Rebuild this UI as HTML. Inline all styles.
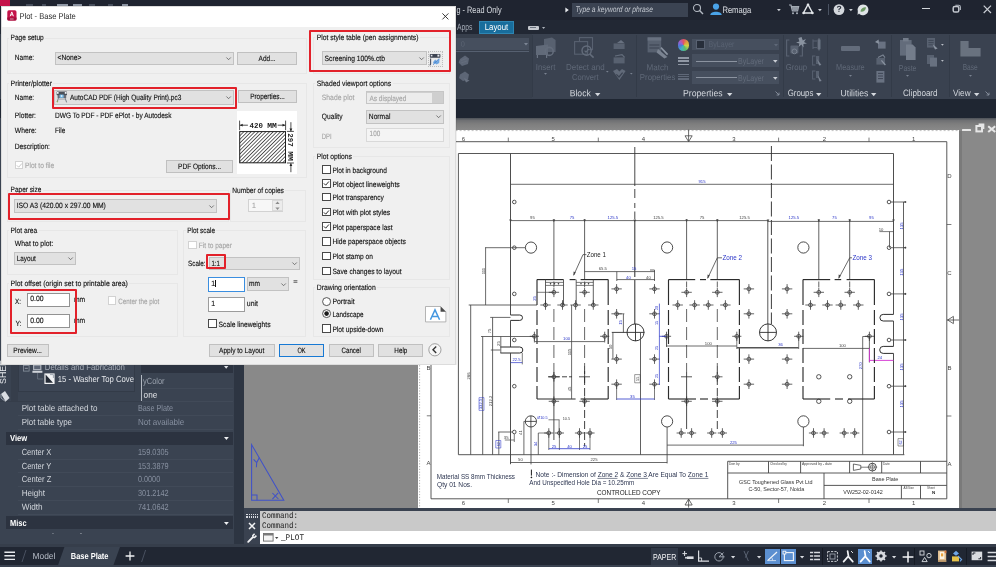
<!DOCTYPE html>
<html><head><meta charset="utf-8"><title>Plot - Base Plate</title>
<style>
html,body{margin:0;padding:0;}
body{width:996px;height:567px;overflow:hidden;position:relative;background:#1f2531;font-family:"Liberation Sans",sans-serif;}
.a{position:absolute;display:block;}
.t{position:absolute;white-space:nowrap;transform-origin:0 50%;display:block;}
svg{overflow:visible;}
#root{position:absolute;left:0;top:0;width:996px;height:567px;overflow:hidden;will-change:transform;}
</style></head><body><div id="root">
<div class="a" style="left:0.00px;top:0.00px;width:996.00px;height:19.50px;background:#1f2430;"></div>
<div class="a" style="left:0.00px;top:0.00px;width:10.40px;height:5.60px;background:#c4124a;"></div>
<div class="a" style="left:26.00px;top:4.00px;width:7.00px;height:1.80px;background:#454c5a;"></div>
<div class="a" style="left:41.50px;top:4.00px;width:4.50px;height:1.80px;background:#454c5a;"></div>
<div class="a" style="left:57.00px;top:4.00px;width:10.50px;height:1.80px;background:#9098a5;"></div>
<div class="a" style="left:73.00px;top:4.00px;width:9.00px;height:1.80px;background:#8a92a0;"></div>
<div class="a" style="left:89.00px;top:4.00px;width:6.00px;height:1.80px;background:#454c5a;"></div>
<div class="a" style="left:107.50px;top:4.00px;width:5.50px;height:1.80px;background:#454c5a;"></div>
<div class="a" style="left:121.60px;top:4.00px;width:6.40px;height:1.80px;background:#8a92a0;"></div>
<div class="a" style="left:0.00px;top:19.50px;width:996.00px;height:14.20px;background:#222834;"></div>
<div class="a" style="left:0.00px;top:33.70px;width:996.00px;height:65.00px;background:#3a4250;"></div>
<div class="a" style="left:0.00px;top:33.70px;width:531.50px;height:64.80px;background:#373f4c;"></div>
<div class="a" style="left:0.00px;top:98.50px;width:996.00px;height:19.20px;background:#1f2632;"></div>
<div class="a" style="left:244.00px;top:117.60px;width:752.00px;height:391.00px;background:#898989;"></div>
<div class="a" style="left:244px;top:117.6px;width:752px;height:12px;background:linear-gradient(#4d5158 0,#6f7073 2.5px,#7e7e7e 6px,#898989 12px)"></div>
<span class="t" style="left:456px;top:2px;font-size:9.4px;line-height:13.16px;color:#d9dde3;transform:translate(0.50px,0.82px) rotate(0.03deg) scaleX(0.7794);">g - Read Only</span>
<div class="a" style="left:572.30px;top:2.50px;width:116.00px;height:14.20px;background:#3b4352;"></div>
<svg class="a" style="left:565.4px;top:6.6px;" width="5" height="6" viewBox="0 0 5 6"><path d="M0.4,0.4 L3.8,3 L0.4,5.6Z" fill="#e8eaee"/></svg>
<span class="t" style="left:575px;top:3px;font-size:8.2px;line-height:11.48px;color:#c3c8d0;font-style:italic;transform:translate(0.50px,0.86px) rotate(0.03deg) scaleX(0.8228);">Type a keyword or phrase</span>
<svg class="a" style="left:692px;top:3.4px;" width="13" height="13" viewBox="0 0 13 13"><circle cx="5" cy="5" r="3.5" fill="none" stroke="#b4bac3" stroke-width="1.1"/><path d="M7.6,7.6 L11,11" stroke="#b4bac3" stroke-width="1.4"/></svg>
<svg class="a" style="left:708px;top:2px;" width="16" height="15" viewBox="0 0 16 15"><circle cx="8" cy="4.6" r="3.1" fill="#4aa3e8"/><path d="M2.3,13 C2.3,8.6 13.7,8.6 13.7,13Z" fill="#4aa3e8"/></svg>
<span class="t" style="left:722px;top:3px;font-size:9.4px;line-height:13.16px;color:#dde0e5;transform:translate(0.40px,0.22px) rotate(0.03deg) scaleX(0.8106);">Remaga</span>
<svg class="a" style="left:777.4px;top:9.059999999999999px;" width="3.8" height="2.4699999999999998" viewBox="0 0 3.8 2.4699999999999998"><path d="M0,0 L3.8,0 L1.9,2.375Z" fill="#c8ccd3"/></svg>
<svg class="a" style="left:789px;top:4px;" width="10" height="11" viewBox="0 0 10 11"><path d="M0,1 L2,1 L3.4,6.8 L8.6,6.8 L9.6,2.6 L2.6,2.6" fill="none" stroke="#a9b0ba" stroke-width="1.2"/><path d="M2.8,2.8 L9.4,2.8 L8.6,6.6 L3.6,6.6Z" fill="#8f96a1"/><circle cx="4" cy="9.2" r="1" fill="#a9b0ba"/><circle cx="8" cy="9.2" r="1" fill="#a9b0ba"/></svg>
<svg class="a" style="left:802px;top:3px;" width="12" height="12" viewBox="0 0 12 12"><path d="M6,1.5 L10.6,10 L1.4,10Z" fill="none" stroke="#e3e6ea" stroke-width="1.5" stroke-linejoin="round"/><circle cx="6" cy="1.8" r="1.3" fill="#e3e6ea"/><circle cx="1.6" cy="10" r="1.3" fill="#e3e6ea"/><circle cx="10.4" cy="10" r="1.3" fill="#e3e6ea"/></svg>
<svg class="a" style="left:817.6px;top:9.059999999999999px;" width="3.8" height="2.4699999999999998" viewBox="0 0 3.8 2.4699999999999998"><path d="M0,0 L3.8,0 L1.9,2.375Z" fill="#c8ccd3"/></svg>
<div class="a" style="left:828.00px;top:4.00px;width:1.00px;height:11.00px;background:#4b5362;"></div>
<svg class="a" style="left:833px;top:4px;" width="12" height="12" viewBox="0 0 12 12"><circle cx="6" cy="5.6" r="5.4" fill="#d3d7dc"/></svg>
<span class="t" style="left:836px;top:3px;font-size:8.5px;line-height:11.90px;color:#2a303c;font-weight:bold;transform:translate(0.40px,0.85px) rotate(0.03deg);">?</span>
<svg class="a" style="left:849.4px;top:9.059999999999999px;" width="3.8" height="2.4699999999999998" viewBox="0 0 3.8 2.4699999999999998"><path d="M0,0 L3.8,0 L1.9,2.375Z" fill="#c8ccd3"/></svg>
<svg class="a" style="left:857px;top:4px;" width="12" height="12" viewBox="0 0 12 12"><path d="M6,0.4 A5.4,5.4 0 1 1 2,9.4 L0.6,11 L0.8,7.2 A5.4,5.4 0 0 1 6,0.4Z" fill="#dfe3e6"/><path d="M3.4,7.6 C4,4 7,3 9,3.4 C8.6,6.4 6.4,8 3.4,7.6Z" fill="#6c9a63"/></svg>
<div class="a" style="left:922.20px;top:8.00px;width:7.40px;height:1.30px;background:#d2d6db;"></div>
<svg class="a" style="left:952px;top:4.4px;" width="10" height="10" viewBox="0 0 10 10"><rect x="1.2" y="2.4" width="5.6" height="5.6" rx="1.6" fill="none" stroke="#c4c8cf" stroke-width="1.5"/><path d="M3.4,1.2 L6.6,1.2 Q8.4,1.2 8.4,3 L8.4,6" fill="none" stroke="#aeb4bd" stroke-width="1.1"/></svg>
<svg class="a" style="left:982.5px;top:4.5px;" width="9" height="9" viewBox="0 0 9 9"><path d="M0.7,0.7 L8,8 M8,0.7 L0.7,8" stroke="#c9cdd3" stroke-width="1.2"/></svg>
<span class="t" style="left:457px;top:21px;font-size:9.2px;line-height:12.88px;color:#a4abb6;transform:translate(0.00px,0.06px) rotate(0.03deg) scaleX(0.7391);">Apps</span>
<div class="a" style="left:479.20px;top:21.00px;width:34.60px;height:12.80px;background:#186d9c;border:1px solid #2e86b3;box-sizing:border-box;"></div>
<span class="t" style="left:484px;top:21px;font-size:9.2px;line-height:12.88px;color:#ffffff;transform:translate(0.75px,0.16px) rotate(0.03deg) scaleX(0.8507);">Layout</span>
<div class="a" style="left:528.00px;top:25.80px;width:10.50px;height:4.20px;background:#c5c9cf;border-radius:1px;"></div>
<div class="a" style="left:530.00px;top:27.20px;width:6.00px;height:1.30px;background:#6c7480;"></div>
<svg class="a" style="left:541.6px;top:27.14px;" width="3.2" height="2.08" viewBox="0 0 3.2 2.08"><path d="M0,0 L3.2,0 L1.6,2.0Z" fill="#aeb4bd"/></svg>
<div class="a" style="left:456.00px;top:38.20px;width:73.00px;height:12.30px;background:#464f5e;"></div>
<div class="a" style="left:456.00px;top:50.50px;width:73.00px;height:0.80px;background:#566070;"></div>
<svg class="a" style="left:523.6px;top:43.4px;" width="4.0" height="2.6" viewBox="0 0 4.0 2.6"><path d="M0,0 L4.0,0 L2.0,2.5Z" fill="#7c8594"/></svg>
<span class="t" style="left:460px;top:39px;font-size:7.4px;line-height:10.36px;color:#5b6473;transform:translate(0.80px,0.42px) rotate(0.03deg);">0</span>
<svg class="a" style="left:457px;top:54px;" width="14" height="14" viewBox="0 0 14 14"><path d="M3,5 L8,1.6 L12,4.6 L11,10 L5,12 L1.6,8.6Z" fill="#5d6676"/><path d="M4,6.5 L9.6,4.4 M4,9 L10,7" stroke="#646d7c" stroke-width="1"/></svg>
<svg class="a" style="left:457px;top:70px;" width="14" height="14" viewBox="0 0 14 14"><path d="M3,4.4 L8,1.6 L12,4.6 L11,9.4 L6,11 L2,8Z" fill="#5d6676"/><path d="M7,8 L12.6,10.4 L9,12.6Z" fill="#687180"/></svg>
<div class="a" style="left:531.50px;top:35.00px;width:1.00px;height:62.00px;background:#333b48;"></div>
<div class="a" style="left:635.50px;top:35.00px;width:1.00px;height:62.00px;background:#333b48;"></div>
<div class="a" style="left:782.60px;top:35.00px;width:1.00px;height:62.00px;background:#333b48;"></div>
<div class="a" style="left:827.20px;top:35.00px;width:1.00px;height:62.00px;background:#333b48;"></div>
<div class="a" style="left:890.90px;top:35.00px;width:1.00px;height:62.00px;background:#333b48;"></div>
<div class="a" style="left:949.40px;top:35.00px;width:1.00px;height:62.00px;background:#333b48;"></div>
<svg class="a" style="left:535px;top:36px;" width="22" height="24" viewBox="0 0 22 24"><path d="M9,3 L17,1.4 L20.6,4 L20.6,16 L9,16Z" fill="#586170"/><path d="M1,10 L13,8.6 L13,19 L1,19Z" fill="#616a79"/><circle cx="14.2" cy="15.4" r="4" fill="none" stroke="#646d7c" stroke-width="1.6"/><path d="M2.4,19 L2.4,22 M11.6,19 L11.6,22" stroke="#6b7483" stroke-width="1.2"/></svg>
<span class="t" style="left:535px;top:60px;font-size:8.6px;line-height:12.04px;color:#5f6877;transform:translate(0.85px,0.68px) rotate(0.03deg) scaleX(0.9066);">Insert</span>
<svg class="a" style="left:544.1px;top:73.3px;" width="3.0" height="1.9500000000000002" viewBox="0 0 3.0 1.9500000000000002"><path d="M0,0 L3.0,0 L1.5,1.875Z" fill="#7a8391"/></svg>
<svg class="a" style="left:573px;top:36px;" width="24" height="24" viewBox="0 0 24 24"><rect x="6.5" y="1.6" width="13" height="12" fill="none" stroke="#586170" stroke-width="1.1"/><rect x="1.6" y="5.6" width="13" height="12.6" fill="#3a4250" stroke="#586170" stroke-width="1.1"/><circle cx="13.6" cy="14.6" r="4.6" fill="none" stroke="#646d7c" stroke-width="1.4"/><path d="M16.8,18 L20.6,21.6" stroke="#646d7c" stroke-width="1.6"/><path d="M11.6,14.6 L13,16.2 L15.8,12.8" fill="none" stroke="#646d7c" stroke-width="1.1"/></svg>
<span class="t" style="left:566px;top:60px;font-size:8.6px;line-height:12.04px;color:#5f6877;transform:translate(0.00px,0.88px) rotate(0.03deg) scaleX(0.9280);">Detect and</span>
<span class="t" style="left:572px;top:71px;font-size:8.6px;line-height:12.04px;color:#5f6877;transform:translate(0.00px,0.18px) rotate(0.03deg) scaleX(0.8833);">Convert</span>
<svg class="a" style="left:606.0px;top:71.42px;" width="2.6" height="1.6900000000000002" viewBox="0 0 2.6 1.6900000000000002"><path d="M0,0 L2.6,0 L1.3,1.625Z" fill="#7a8391"/></svg>
<svg class="a" style="left:613px;top:39px;" width="13" height="11" viewBox="0 0 13 11"><rect x="0.6" y="4.4" width="11" height="5.6" fill="#586170"/><path d="M4,4 L8,1 L11.4,4Z" fill="#687180"/></svg>
<svg class="a" style="left:613px;top:54px;" width="13" height="11" viewBox="0 0 13 11"><rect x="0.6" y="3.4" width="11" height="6" fill="#586170"/><path d="M2,2 L9,0.6 L11.6,3.4" fill="none" stroke="#646d7c" stroke-width="1.2"/></svg>
<svg class="a" style="left:612px;top:68px;" width="15" height="14" viewBox="0 0 15 14"><path d="M1,3 L5,1 L7.4,3.4 L10,1 L13.6,3 L7.4,12Z" fill="#616a79"/><path d="M4.4,6.4 L7,9 L10.6,4.6" fill="none" stroke="#3a4250" stroke-width="1.2"/></svg>
<svg class="a" style="left:629.7px;top:72.82px;" width="2.6" height="1.6900000000000002" viewBox="0 0 2.6 1.6900000000000002"><path d="M0,0 L2.6,0 L1.3,1.625Z" fill="#7a8391"/></svg>
<span class="t" style="left:569px;top:87px;font-size:9.2px;line-height:12.88px;color:#d4d8de;transform:translate(0.70px,0.26px) rotate(0.03deg) scaleX(0.9379);">Block</span>
<svg class="a" style="left:594.9px;top:92.78px;" width="5.4" height="3.5100000000000002" viewBox="0 0 5.4 3.5100000000000002"><path d="M0,0 L5.4,0 L2.7,3.375Z" fill="#d4d8de"/></svg>
<svg class="a" style="left:646px;top:36px;" width="24" height="24" viewBox="0 0 24 24"><rect x="1.6" y="1.4" width="13.6" height="15" fill="#586170"/><rect x="1.6" y="1.4" width="13.6" height="3.2" fill="#687180"/><path d="M3.4,9 L13.4,9 M3.4,12 L13.4,12" stroke="#3a4250" stroke-width="1"/><path d="M12,13 L21.4,21 L18.4,22.6 L10.6,16.6Z" fill="#7a8391"/><path d="M15,11.6 L21.6,18.6" stroke="#8a93a0" stroke-width="1.6"/></svg>
<span class="t" style="left:646px;top:61px;font-size:8.6px;line-height:12.04px;color:#5f6877;transform:translate(0.60px,0.18px) rotate(0.03deg) scaleX(0.9394);">Match</span>
<span class="t" style="left:639px;top:70px;font-size:8.6px;line-height:12.04px;color:#5f6877;transform:translate(0.85px,0.68px) rotate(0.03deg) scaleX(0.9057);">Properties</span>
<div class="a" style="left:677.8px;top:39.4px;width:11.2px;height:11.2px;border-radius:50%;background:conic-gradient(#e8546a,#e9a53c,#d6d84a,#5fc36a,#45b7c9,#4e7be0,#a45fd6,#e8546a);opacity:.95"></div>
<div class="a" style="left:678.20px;top:57.20px;width:10.80px;height:1.90px;background:#9098a5;"></div>
<div class="a" style="left:678.20px;top:60.40px;width:10.80px;height:1.90px;background:#9098a5;"></div>
<div class="a" style="left:678.20px;top:63.60px;width:10.80px;height:1.90px;background:#9098a5;"></div>
<div class="a" style="left:678.20px;top:73.60px;width:10.80px;height:1.20px;background:#5f6878;"></div>
<div class="a" style="left:678.20px;top:76.00px;width:10.80px;height:1.20px;background:#5f6878;"></div>
<div class="a" style="left:678.20px;top:78.40px;width:10.80px;height:1.20px;background:#5f6878;"></div>
<div class="a" style="left:691.80px;top:38.80px;width:87.60px;height:11.60px;background:#464f5e;"></div>
<div class="a" style="left:691.80px;top:54.40px;width:87.60px;height:12.60px;background:#464f5e;"></div>
<div class="a" style="left:691.80px;top:71.00px;width:87.60px;height:12.80px;background:#464f5e;"></div>
<div class="a" style="left:695.60px;top:40.00px;width:9.80px;height:9.40px;background:#272e3a;border:1px solid #596272;box-sizing:border-box;"></div>
<span class="t" style="left:708px;top:39px;font-size:8.4px;line-height:11.76px;color:#596272;transform:translate(0.60px,0.02px) rotate(0.03deg) scaleX(0.8405);">ByLayer</span>
<svg class="a" style="left:773.6px;top:43.8px;" width="4.0" height="2.6" viewBox="0 0 4.0 2.6"><path d="M0,0 L4.0,0 L2.0,2.5Z" fill="#5f6878"/></svg>
<div class="a" style="left:696.00px;top:60.60px;width:41.00px;height:1.00px;background:#8b93a0;"></div>
<span class="t" style="left:738px;top:54px;font-size:8.6px;line-height:12.04px;color:#626b7a;transform:translate(0.00px,0.98px) rotate(0.03deg) scaleX(0.8241);">ByLayer</span>
<svg class="a" style="left:773.3000000000001px;top:60.019999999999996px;" width="4.6" height="2.9899999999999998" viewBox="0 0 4.6 2.9899999999999998"><path d="M0,0 L4.6,0 L2.3,2.875Z" fill="#c9cdd4"/></svg>
<div class="a" style="left:696.00px;top:77.20px;width:41.00px;height:1.00px;background:#8b93a0;"></div>
<span class="t" style="left:738px;top:71px;font-size:8.6px;line-height:12.04px;color:#626b7a;transform:translate(0.00px,0.58px) rotate(0.03deg) scaleX(0.8241);">ByLayer</span>
<svg class="a" style="left:773.3000000000001px;top:76.62px;" width="4.6" height="2.9899999999999998" viewBox="0 0 4.6 2.9899999999999998"><path d="M0,0 L4.6,0 L2.3,2.875Z" fill="#c9cdd4"/></svg>
<span class="t" style="left:683px;top:87px;font-size:9.2px;line-height:12.88px;color:#d4d8de;transform:translate(0.00px,0.26px) rotate(0.03deg) scaleX(0.9444);">Properties</span>
<svg class="a" style="left:726.5999999999999px;top:92.78px;" width="5.4" height="3.5100000000000002" viewBox="0 0 5.4 3.5100000000000002"><path d="M0,0 L5.4,0 L2.7,3.375Z" fill="#d4d8de"/></svg>
<svg class="a" style="left:774.5px;top:91.4px;" width="5" height="5" viewBox="0 0 5 5"><path d="M0.5,0.5 L4,4 M4,1.6 L4,4 L1.6,4" fill="none" stroke="#8a93a0" stroke-width="0.9"/></svg>
<svg class="a" style="left:785px;top:36px;" width="23" height="24" viewBox="0 0 23 24"><path d="M4.4,4 L1.6,4 L1.6,20 L4.4,20 M14.6,4 L17.4,4 L17.4,20 L14.6,20" fill="none" stroke="#586170" stroke-width="1.2"/><rect x="5.4" y="9.6" width="8" height="8" rx="1" fill="#586170"/><circle cx="9.4" cy="15.4" r="2.4" fill="none" stroke="#7a8391" stroke-width="1"/><path d="M16.6,1 L17.6,4.4 L21,3 L19,6 L22,7.6 L18.4,8 L18.6,11.6 L16.4,8.6 L13.6,11 L14.4,7.6 L11,6.6 L14.4,5.4 L13.4,2 Z" fill="#8a93a0"/></svg>
<span class="t" style="left:785px;top:61px;font-size:8.6px;line-height:12.04px;color:#5f6877;transform:translate(0.65px,0.38px) rotate(0.03deg) scaleX(0.8995);">Group</span>
<svg class="a" style="left:811px;top:38px;" width="12" height="13" viewBox="0 0 12 13"><path d="M2,1.4 L2,11 M2,3 L6,3 M2,9.6 L6,9.6" stroke="#586170" stroke-width="1"/><rect x="6.4" y="1.6" width="3.4" height="9.6" fill="#586170"/><path d="M8,0.4 L8,12.4" stroke="#7a8391" stroke-width="1"/></svg>
<svg class="a" style="left:811px;top:54px;" width="12" height="13" viewBox="0 0 12 13"><path d="M1.6,1.6 L1.6,11.4 M1.6,2 L4.4,2 M1.6,11 L4.4,11" stroke="#586170" stroke-width="1"/><rect x="5" y="2" width="3.2" height="8" fill="#586170"/><path d="M6,5 L10.4,11 L8,11.4Z" fill="#7a8391"/></svg>
<svg class="a" style="left:811px;top:69px;" width="12" height="14" viewBox="0 0 12 14"><path d="M1.6,1.6 L1.6,10.4 M1.6,2 L4.4,2 M1.6,10 L4.4,10" stroke="#586170" stroke-width="1"/><rect x="5" y="2" width="3" height="7" fill="#586170"/><path d="M6.6,6 L10.6,12 L8.4,12.6Z" fill="#7a8391"/></svg>
<span class="t" style="left:787px;top:87px;font-size:9.2px;line-height:12.88px;color:#d4d8de;transform:translate(0.70px,0.26px) rotate(0.03deg) scaleX(0.8518);">Groups</span>
<svg class="a" style="left:815.9px;top:92.78px;" width="5.4" height="3.5100000000000002" viewBox="0 0 5.4 3.5100000000000002"><path d="M0,0 L5.4,0 L2.7,3.375Z" fill="#d4d8de"/></svg>
<div class="a" style="left:840.60px;top:46.00px;width:19.60px;height:5.00px;background:#636c7b;border-radius:1px;"></div>
<span class="t" style="left:836px;top:61px;font-size:8.6px;line-height:12.04px;color:#5f6877;transform:translate(0.10px,0.38px) rotate(0.03deg) scaleX(0.8547);">Measure</span>
<svg class="a" style="left:848.9px;top:74.69999999999999px;" width="3.0" height="1.9500000000000002" viewBox="0 0 3.0 1.9500000000000002"><path d="M0,0 L3.0,0 L1.5,1.875Z" fill="#7a8391"/></svg>
<svg class="a" style="left:874px;top:38px;" width="13" height="13" viewBox="0 0 13 13"><rect x="4" y="3.6" width="7.6" height="7" fill="#697282"/><path d="M1,4 L4.6,1.4 L5,6Z" fill="#8a93a0"/></svg>
<svg class="a" style="left:874px;top:54px;" width="13" height="13" viewBox="0 0 13 13"><rect x="2.4" y="4" width="8.6" height="6.6" fill="#586170"/><path d="M4,3.4 L9,1 L11,3.6" fill="none" stroke="#7a8391" stroke-width="1.1"/><path d="M7.4,6.4 L11.4,11" stroke="#8a93a0" stroke-width="1.2"/></svg>
<svg class="a" style="left:875px;top:70px;" width="11" height="14" viewBox="0 0 11 14"><rect x="1.4" y="1" width="8" height="11.6" fill="#697282"/><path d="M3,3.4 L8,3.4 M3,6 L8,6 M3,8.6 L8,8.6" stroke="#3a4250" stroke-width="0.9"/></svg>
<span class="t" style="left:840px;top:87px;font-size:9.2px;line-height:12.88px;color:#d4d8de;transform:translate(0.50px,0.26px) rotate(0.03deg) scaleX(0.9410);">Utilities</span>
<svg class="a" style="left:871.3px;top:92.78px;" width="5.4" height="3.5100000000000002" viewBox="0 0 5.4 3.5100000000000002"><path d="M0,0 L5.4,0 L2.7,3.375Z" fill="#d4d8de"/></svg>
<svg class="a" style="left:898px;top:36px;" width="20" height="26" viewBox="0 0 20 26"><rect x="2" y="4" width="11.6" height="15.6" fill="#636c7b"/><rect x="5" y="2" width="5.6" height="3.4" fill="#737c8a"/><path d="M8,8.6 L14.6,8.6 L17.6,11.6 L17.6,24 L8,24Z" fill="#747d8b"/></svg>
<span class="t" style="left:898px;top:61px;font-size:8.6px;line-height:12.04px;color:#5f6877;transform:translate(0.85px,0.58px) rotate(0.03deg) scaleX(0.7958);">Paste</span>
<svg class="a" style="left:906.3px;top:74.69999999999999px;" width="3.0" height="1.9500000000000002" viewBox="0 0 3.0 1.9500000000000002"><path d="M0,0 L3.0,0 L1.5,1.875Z" fill="#7a8391"/></svg>
<svg class="a" style="left:926px;top:37px;" width="13" height="14" viewBox="0 0 13 14"><rect x="1" y="1" width="8" height="9.6" fill="#586170"/><path d="M2.4,3.4 L7.6,3.4 M2.4,5.6 L7.6,5.6 M2.4,7.8 L7.6,7.8" stroke="#3a4250" stroke-width="0.8"/><path d="M6.6,7 L11.6,11.6 L9,12.4Z" fill="#8a93a0"/></svg>
<svg class="a" style="left:941.0px;top:43.76px;" width="2.8" height="1.8199999999999998" viewBox="0 0 2.8 1.8199999999999998"><path d="M0,0 L2.8,0 L1.4,1.75Z" fill="#b9bec6"/></svg>
<svg class="a" style="left:926px;top:54px;" width="13" height="14" viewBox="0 0 13 14"><rect x="1" y="1" width="7" height="9" fill="#586170"/><rect x="4" y="3.6" width="7" height="9" fill="#687180"/></svg>
<svg class="a" style="left:941.0px;top:60.16px;" width="2.8" height="1.8199999999999998" viewBox="0 0 2.8 1.8199999999999998"><path d="M0,0 L2.8,0 L1.4,1.75Z" fill="#b9bec6"/></svg>
<span class="t" style="left:903px;top:87px;font-size:9.2px;line-height:12.88px;color:#d4d8de;transform:translate(0.00px,0.26px) rotate(0.03deg) scaleX(0.8786);">Clipboard</span>
<svg class="a" style="left:959px;top:40px;" width="23" height="18" viewBox="0 0 23 18"><path d="M1.4,1 L9.6,1 L9.6,8 L21.6,8 L21.6,16.6 L1.4,16.6Z" fill="#69727f"/></svg>
<span class="t" style="left:962px;top:61px;font-size:8.6px;line-height:12.04px;color:#5f6877;transform:translate(0.70px,0.38px) rotate(0.03deg) scaleX(0.7652);">Base</span>
<svg class="a" style="left:968.9px;top:74.69999999999999px;" width="3.0" height="1.9500000000000002" viewBox="0 0 3.0 1.9500000000000002"><path d="M0,0 L3.0,0 L1.5,1.875Z" fill="#7a8391"/></svg>
<span class="t" style="left:953px;top:87px;font-size:9.2px;line-height:12.88px;color:#d4d8de;transform:translate(0.00px,0.26px) rotate(0.03deg) scaleX(0.8900);">View</span>
<svg class="a" style="left:974.1999999999999px;top:92.78px;" width="5.4" height="3.5100000000000002" viewBox="0 0 5.4 3.5100000000000002"><path d="M0,0 L5.4,0 L2.7,3.375Z" fill="#d4d8de"/></svg>
<svg class="a" style="left:984.5px;top:91.4px;" width="5" height="5" viewBox="0 0 5 5"><path d="M0.5,0.5 L4,4 M4,1.6 L4,4 L1.6,4" fill="none" stroke="#8a93a0" stroke-width="0.9"/></svg>
<div class="a" style="left:417.50px;top:129.50px;width:541.50px;height:378.00px;background:#ffffff;"></div>
<div class="a" style="left:959.00px;top:131.00px;width:2.50px;height:377.00px;background:#7a7a7a;"></div>
<svg class="a" style="left:0;top:0" width="996" height="567" viewBox="0 0 996 567" font-family="Liberation Sans, sans-serif" fill="none"><path d="M431,141.7 L946.8,141.7" stroke="#454545" stroke-width="0.9"/><path d="M431,141.7 L431,498.8" stroke="#454545" stroke-width="0.9"/><path d="M946.8,141.7 L946.8,498.8" stroke="#454545" stroke-width="0.9"/><path d="M431,498.8 L946.8,498.8" stroke="#454545" stroke-width="0.9"/><path d="M419.6,130 L419.6,507.5" stroke="#9a9a9a" stroke-width="0.8" stroke-dasharray="1.2 1.6"/><path d="M419.6,130.6 L958.6,130.6" stroke="#b0b0b0" stroke-width="0.8" stroke-dasharray="2 2"/><text x="463.3" y="141" font-size="6" fill="#454545" text-anchor="middle">6</text><text x="463.3" y="504.6" font-size="6" fill="#454545" text-anchor="middle">6</text><text x="553.2" y="141" font-size="6" fill="#454545" text-anchor="middle">5</text><text x="553.2" y="504.6" font-size="6" fill="#454545" text-anchor="middle">5</text><text x="643.5" y="141" font-size="6" fill="#454545" text-anchor="middle">4</text><text x="643.5" y="504.6" font-size="6" fill="#454545" text-anchor="middle">4</text><text x="734" y="141" font-size="6" fill="#454545" text-anchor="middle">3</text><text x="734" y="504.6" font-size="6" fill="#454545" text-anchor="middle">3</text><text x="824.4" y="141" font-size="6" fill="#454545" text-anchor="middle">2</text><text x="824.4" y="504.6" font-size="6" fill="#454545" text-anchor="middle">2</text><text x="913.6" y="141" font-size="6" fill="#454545" text-anchor="middle">1</text><text x="913.6" y="504.6" font-size="6" fill="#454545" text-anchor="middle">1</text><path d="M508.3,137.6 L508.3,141.7" stroke="#454545" stroke-width="0.7"/><path d="M508.3,498.8 L508.3,503" stroke="#454545" stroke-width="0.7"/><path d="M598.3,137.6 L598.3,141.7" stroke="#454545" stroke-width="0.7"/><path d="M598.3,498.8 L598.3,503" stroke="#454545" stroke-width="0.7"/><path d="M778.6,137.6 L778.6,141.7" stroke="#454545" stroke-width="0.7"/><path d="M778.6,498.8 L778.6,503" stroke="#454545" stroke-width="0.7"/><path d="M869,137.6 L869,141.7" stroke="#454545" stroke-width="0.7"/><path d="M869,498.8 L869,503" stroke="#454545" stroke-width="0.7"/><path d="M685,135.8 L692.2,135.8 L688.6,141.6Z" stroke="#454545" stroke-width="0.8" fill="none"/><path d="M688.6,129.6 L688.6,141.6" stroke="#454545" stroke-width="0.8"/><path d="M685,505 L692.2,505 L688.6,499Z" stroke="#454545" stroke-width="0.8" fill="none"/><path d="M688.6,499 L688.6,507.6" stroke="#454545" stroke-width="0.8"/><path d="M947.6,320 L953.4,316.4 L953.4,323.6Z" stroke="#454545" stroke-width="0.8" fill="none"/><path d="M947,320 L959,320" stroke="#454545" stroke-width="0.8"/><text x="949.4" y="178.4" font-size="6" fill="#454545" text-anchor="middle">D</text><text x="949.4" y="274.8" font-size="6" fill="#454545" text-anchor="middle">C</text><text x="949.4" y="369.8" font-size="6" fill="#454545" text-anchor="middle">B</text><text x="949.4" y="466" font-size="6" fill="#454545" text-anchor="middle">A</text><text x="428.4" y="369.8" font-size="6" fill="#454545" text-anchor="middle">B</text><text x="428.4" y="465.2" font-size="6" fill="#454545" text-anchor="middle">A</text><path d="M946.8,224.5 L951.4,224.5" stroke="#454545" stroke-width="0.7"/><path d="M946.8,416 L951.4,416" stroke="#454545" stroke-width="0.7"/><path d="M426.8,415.8 L431,415.8" stroke="#454545" stroke-width="0.7"/><path d="M458.4,153.5 L893.5,153.5" stroke="#454545" stroke-width="0.9"/><path d="M458.4,153.5 L458.4,454.7" stroke="#454545" stroke-width="0.9"/><path d="M510.5,153.5 L510.5,315" stroke="#454545" stroke-width="0.95"/><path d="M893.5,153.5 L893.5,314.4" stroke="#454545" stroke-width="0.95"/><path d="M510.5,184.3 L893.5,184.3" stroke="#454545" stroke-width="0.8"/><text x="702" y="183" font-size="4.2" fill="#2a35c8" text-anchor="middle">915</text><path d="M634.8,147 L634.8,186" stroke="#333" stroke-width="0.9"/><path d="M634.8,189 L634.8,198" stroke="#333" stroke-width="0.9"/><path d="M634.8,203 L634.8,208" stroke="#333" stroke-width="0.9"/><path d="M634.8,211.5 L634.8,219" stroke="#333" stroke-width="0.9"/><path d="M634.8,220 L634.8,277" stroke="#333" stroke-width="1.05"/><path d="M634.8,280 L634.8,324" stroke="#333" stroke-width="1.05"/><path d="M771.4,146 L771.4,324" stroke="#333" stroke-width="0.95" stroke-dasharray="15 3.5"/><path d="M767.8,221 L767.8,324" stroke="#454545" stroke-width="0.9"/><path d="M510.5,220.6 L768,220.6" stroke="#454545" stroke-width="0.8"/><path d="M768,221.4 L893.5,221.4" stroke="#454545" stroke-width="0.8"/><path d="M553.9,219 L553.9,279.6" stroke="#454545" stroke-width="0.85"/><path d="M553.9,281.5 L553.9,287" stroke="#454545" stroke-width="0.85"/><path d="M584.6,219 L584.6,279.6" stroke="#454545" stroke-width="0.85"/><path d="M584.6,281.5 L584.6,287" stroke="#454545" stroke-width="0.85"/><path d="M686.6,219 L686.6,279.6" stroke="#454545" stroke-width="0.85"/><path d="M686.6,281.5 L686.6,287" stroke="#454545" stroke-width="0.85"/><path d="M717.3,219 L717.3,279.6" stroke="#454545" stroke-width="0.85"/><path d="M717.3,281.5 L717.3,287" stroke="#454545" stroke-width="0.85"/><path d="M818.8,219 L818.8,279.6" stroke="#454545" stroke-width="0.85"/><path d="M818.8,281.5 L818.8,287" stroke="#454545" stroke-width="0.85"/><path d="M849.7,219 L849.7,279.6" stroke="#454545" stroke-width="0.85"/><path d="M849.7,281.5 L849.7,287" stroke="#454545" stroke-width="0.85"/><text x="532.4" y="219.2" font-size="4.2" fill="#454545" text-anchor="middle">95</text><text x="572" y="219.2" font-size="4.2" fill="#2a35c8" text-anchor="middle">75</text><text x="612.8" y="219.2" font-size="4.2" fill="#2a35c8" text-anchor="middle">125.5</text><text x="658.4" y="219.2" font-size="4.2" fill="#454545" text-anchor="middle">125.5</text><text x="702" y="219.2" font-size="4.2" fill="#454545" text-anchor="middle">75</text><text x="744.5" y="219.2" font-size="4.2" fill="#454545" text-anchor="middle">125.5</text><text x="793.8" y="219.2" font-size="4.2" fill="#2a35c8" text-anchor="middle">125.5</text><text x="834.4" y="219.2" font-size="4.2" fill="#2a35c8" text-anchor="middle">75</text><text x="871.4" y="219.2" font-size="4.2" fill="#2a35c8" text-anchor="middle">95</text><path d="M509.2,219.6 L511.8,219.6 L510.5,222.2Z" stroke="none" stroke-width="0" fill="#454545"/><path d="M552.6,219.6 L555.1999999999999,219.6 L553.9,222.2Z" stroke="none" stroke-width="0" fill="#454545"/><path d="M583.3000000000001,219.6 L585.9,219.6 L584.6,222.2Z" stroke="none" stroke-width="0" fill="#454545"/><path d="M633.5,219.6 L636.0999999999999,219.6 L634.8,222.2Z" stroke="none" stroke-width="0" fill="#454545"/><path d="M685.3000000000001,219.6 L687.9,219.6 L686.6,222.2Z" stroke="none" stroke-width="0" fill="#454545"/><path d="M716.0,219.6 L718.5999999999999,219.6 L717.3,222.2Z" stroke="none" stroke-width="0" fill="#454545"/><path d="M766.7,219.6 L769.3,219.6 L768,222.2Z" stroke="none" stroke-width="0" fill="#454545"/><path d="M817.5,219.6 L820.0999999999999,219.6 L818.8,222.2Z" stroke="none" stroke-width="0" fill="#454545"/><path d="M848.4000000000001,219.6 L851.0,219.6 L849.7,222.2Z" stroke="none" stroke-width="0" fill="#454545"/><path d="M892.2,219.6 L894.8,219.6 L893.5,222.2Z" stroke="none" stroke-width="0" fill="#454545"/><circle cx="514.3" cy="202" r="1.8" stroke="#2c2c2c" stroke-width="0.8" fill="none"/><circle cx="889" cy="202" r="1.8" stroke="#2c2c2c" stroke-width="0.8" fill="none"/><circle cx="514.3" cy="247.7" r="1.8" stroke="#2c2c2c" stroke-width="0.8" fill="none"/><circle cx="889" cy="247.7" r="1.8" stroke="#2c2c2c" stroke-width="0.8" fill="none"/><circle cx="514.3" cy="293.9" r="1.8" stroke="#2c2c2c" stroke-width="0.8" fill="none"/><circle cx="889" cy="293.9" r="1.8" stroke="#2c2c2c" stroke-width="0.8" fill="none"/><circle cx="514.3" cy="340" r="1.8" stroke="#2c2c2c" stroke-width="0.8" fill="none"/><circle cx="889" cy="340" r="1.8" stroke="#2c2c2c" stroke-width="0.8" fill="none"/><circle cx="514.3" cy="386.2" r="1.8" stroke="#2c2c2c" stroke-width="0.8" fill="none"/><circle cx="889" cy="386.2" r="1.8" stroke="#2c2c2c" stroke-width="0.8" fill="none"/><circle cx="514.3" cy="432" r="1.8" stroke="#2c2c2c" stroke-width="0.8" fill="none"/><circle cx="889" cy="432" r="1.8" stroke="#2c2c2c" stroke-width="0.8" fill="none"/><path d="M525.4,421.4 L536.4,421.4" stroke="#2c2c2c" stroke-width="0.8"/><path d="M530.9,416 L530.9,427" stroke="#2c2c2c" stroke-width="0.8"/><circle cx="531" cy="247.6" r="5.6" stroke="#2c2c2c" stroke-width="0.85" fill="none"/><circle cx="667.1" cy="247.5" r="5.6" stroke="#2c2c2c" stroke-width="0.85" fill="none"/><circle cx="803.4" cy="247.5" r="5.6" stroke="#2c2c2c" stroke-width="0.85" fill="none"/><circle cx="530.9" cy="421.4" r="5.6" stroke="#2c2c2c" stroke-width="0.85" fill="none"/><circle cx="667.1" cy="421.4" r="5.6" stroke="#2c2c2c" stroke-width="0.85" fill="none"/><circle cx="803.4" cy="421.4" r="5.6" stroke="#2c2c2c" stroke-width="0.85" fill="none"/><path d="M485,247.7 L525.4,247.7" stroke="#454545" stroke-width="0.8"/><path d="M485.6,247.7 L485.6,305" stroke="#454545" stroke-width="0.8"/><text x="484.6" y="271" font-size="4.2" fill="#454545" text-anchor="middle" transform="rotate(-90 484.6 271)">111</text><path d="M468.7,305 L537,305" stroke="#454545" stroke-width="0.85"/><path d="M470.7,305 L470.7,454.7" stroke="#454545" stroke-width="0.85"/><path d="M482.7,336.5 L482.7,454.7" stroke="#454545" stroke-width="0.85"/><path d="M492.6,317.4 L492.6,454.7" stroke="#454545" stroke-width="0.85"/><path d="M481,336.5 L534.4,336.5" stroke="#454545" stroke-width="0.8"/><text x="469.8" y="376" font-size="4.2" fill="#454545" text-anchor="middle" transform="rotate(-90 469.8 376)">286</text><text x="491.8" y="401" font-size="4.2" fill="#454545" text-anchor="middle" transform="rotate(-90 491.8 401)">212.2</text><text x="481.8" y="404" font-size="4.2" fill="#2a35c8" text-anchor="middle" transform="rotate(-90 481.8 404)">332.5</text><path d="M479,397.6 L484,397.6 L484,410.4 L479,410.4Z" stroke="#2a35c8" stroke-width="0.5" fill="none"/><text x="491.4" y="331" font-size="4.2" fill="#454545" text-anchor="middle" transform="rotate(-90 491.4 331)">75</text><path d="M490.2,317.4 L510.5,317.4" stroke="#454545" stroke-width="0.8"/><path d="M510.5,315 L519.8,315 A2.7,2.7 0 0 1 519.8,320.4 L510.5,320.4" stroke="#2c2c2c" stroke-width="1.0" fill="none"/><path d="M510.5,320.4 L510.5,347" stroke="#454545" stroke-width="0.95"/><path d="M490.8,350 L500.4,350" stroke="#454545" stroke-width="0.8"/><path d="M500.4,347 L519.8,347 A3,3 0 0 1 519.8,353 L500.4,353" stroke="#2c2c2c" stroke-width="1.0" fill="none"/><path d="M500.8,336.5 L500.8,353" stroke="#454545" stroke-width="0.8"/><text x="500" y="343.6" font-size="4.2" fill="#454545" text-anchor="middle" transform="rotate(-90 500 343.6)">25</text><path d="M510.5,353 L510.5,464.2" stroke="#454545" stroke-width="0.95"/><path d="M522.3,353 L522.3,364.4" stroke="#454545" stroke-width="0.7"/><path d="M510.5,362.6 L522.3,362.6" stroke="#2a35c8" stroke-width="0.7"/><text x="516.6" y="361.4" font-size="4.2" fill="#2a35c8" text-anchor="middle">22.5</text><path d="M893.5,314.4 L883.2,314.4 A3.3,3.3 0 0 0 883.2,321 L893.5,321" stroke="#2c2c2c" stroke-width="1.0" fill="none"/><path d="M893.5,321 L893.5,346.4" stroke="#454545" stroke-width="0.95"/><path d="M893.5,346.4 L883.2,346.4 A3.4,3.4 0 0 0 883.2,353.4 L893.5,353.4" stroke="#2c2c2c" stroke-width="1.0" fill="none"/><path d="M893.5,353.4 L893.5,454.6" stroke="#454545" stroke-width="0.95"/><path d="M903.5,202 L903.5,454.6" stroke="#454545" stroke-width="0.85"/><path d="M891,202 L906.4,202" stroke="#454545" stroke-width="0.8"/><path d="M903.5,202 L906,200.9 L906,203.1Z" stroke="none" stroke-width="0" fill="#454545"/><path d="M891,247.7 L906.4,247.7" stroke="#454545" stroke-width="0.8"/><path d="M903.5,247.7 L906,246.6 L906,248.79999999999998Z" stroke="none" stroke-width="0" fill="#454545"/><path d="M891,293.9 L906.4,293.9" stroke="#454545" stroke-width="0.8"/><path d="M903.5,293.9 L906,292.79999999999995 L906,295.0Z" stroke="none" stroke-width="0" fill="#454545"/><path d="M891,340 L906.4,340" stroke="#454545" stroke-width="0.8"/><path d="M903.5,340 L906,338.9 L906,341.1Z" stroke="none" stroke-width="0" fill="#454545"/><path d="M891,386.2 L906.4,386.2" stroke="#454545" stroke-width="0.8"/><path d="M903.5,386.2 L906,385.09999999999997 L906,387.3Z" stroke="none" stroke-width="0" fill="#454545"/><path d="M891,432 L906.4,432" stroke="#454545" stroke-width="0.8"/><path d="M903.5,432 L906,430.9 L906,433.1Z" stroke="none" stroke-width="0" fill="#454545"/><text x="902.6" y="226" font-size="4.2" fill="#2a35c8" text-anchor="middle" transform="rotate(-90 902.6 226)">135</text><text x="902.6" y="272.2" font-size="4.2" fill="#2a35c8" text-anchor="middle" transform="rotate(-90 902.6 272.2)">135</text><text x="902.6" y="317" font-size="4.2" fill="#2a35c8" text-anchor="middle" transform="rotate(-90 902.6 317)">135</text><text x="902.6" y="367" font-size="4.2" fill="#2a35c8" text-anchor="middle" transform="rotate(-90 902.6 367)">135</text><text x="902.6" y="404" font-size="4.2" fill="#2a35c8" text-anchor="middle" transform="rotate(-90 902.6 404)">135</text><text x="881" y="230.6" font-size="4.2" fill="#454545" text-anchor="middle">10</text><path d="M879.4,231.6 L893.5,231.6" stroke="#454545" stroke-width="0.7"/><path d="M889.5,231.6 L889.5,247.7" stroke="#454545" stroke-width="0.8"/><path d="M898,438.6 L903.4,438.6 L903.4,446 L898,446Z" stroke="#454545" stroke-width="0.55" fill="none"/><text x="901.8" y="442.4" font-size="3.8" fill="#2a35c8" text-anchor="middle" transform="rotate(-90 901.8 442.4)">62</text><path d="M869.4,336.5 L869.4,362.5" stroke="#454545" stroke-width="0.8"/><path d="M869.4,348 L869.4,362" stroke="#d32fd0" stroke-width="0.9"/><path d="M869.4,360.4 L893.5,360.4" stroke="#d32fd0" stroke-width="0.9"/><text x="879.8" y="359.4" font-size="4.2" fill="#2a35c8" text-anchor="middle">24</text><path d="M862.7,336.5 L869.4,336.5" stroke="#454545" stroke-width="0.8"/><path d="M862.7,336.5 L862.7,454.6" stroke="#454545" stroke-width="0.8"/><text x="861.6" y="365.8" font-size="4.2" fill="#2a35c8" text-anchor="middle" transform="rotate(-90 861.6 365.8)">270</text><path d="M537,279.6 L563.6,279.6" stroke="#2c2c2c" stroke-width="1.15"/><path d="M569.6,279.6 L575.6,279.6" stroke="#2c2c2c" stroke-width="1.15"/><path d="M580.6,279.6 L608.2,279.6" stroke="#2c2c2c" stroke-width="1.15"/><path d="M537,399 L575.6,399" stroke="#2c2c2c" stroke-width="1.15"/><path d="M580.6,399 L608.2,399" stroke="#2c2c2c" stroke-width="1.15"/><path d="M537,279.6 L537,305" stroke="#2c2c2c" stroke-width="1.15"/><path d="M537,310 L537,399" stroke="#2c2c2c" stroke-width="1.15" stroke-dasharray="15 4"/><path d="M608.2,279.6 L608.2,305" stroke="#2c2c2c" stroke-width="1.15"/><path d="M608.2,310 L608.2,399" stroke="#2c2c2c" stroke-width="1.15" stroke-dasharray="15 4"/><path d="M668.5,279.6 L695.2,279.6" stroke="#2c2c2c" stroke-width="1.15"/><path d="M700,279.6 L706,279.6" stroke="#2c2c2c" stroke-width="1.15"/><path d="M710.3,279.6 L739.4,279.6" stroke="#2c2c2c" stroke-width="1.15"/><path d="M668.5,399 L696,399" stroke="#2c2c2c" stroke-width="1.15"/><path d="M700,399 L708,399" stroke="#2c2c2c" stroke-width="1.15"/><path d="M712,399 L739.4,399" stroke="#2c2c2c" stroke-width="1.15"/><path d="M668.5,279.6 L668.5,305" stroke="#2c2c2c" stroke-width="1.15"/><path d="M668.5,310 L668.5,399" stroke="#2c2c2c" stroke-width="1.15" stroke-dasharray="15 4"/><path d="M739.4,279.6 L739.4,305" stroke="#2c2c2c" stroke-width="1.15"/><path d="M739.4,310 L739.4,399" stroke="#2c2c2c" stroke-width="1.15" stroke-dasharray="15 4"/><path d="M803,279.6 L830.2,279.6" stroke="#2c2c2c" stroke-width="1.15"/><path d="M834.6,279.6 L841.2,279.6" stroke="#2c2c2c" stroke-width="1.15"/><path d="M846.6,279.6 L874.4,279.6" stroke="#2c2c2c" stroke-width="1.15"/><path d="M803,399 L830.2,399" stroke="#2c2c2c" stroke-width="1.15"/><path d="M835,399 L843,399" stroke="#2c2c2c" stroke-width="1.15"/><path d="M848,399 L874.4,399" stroke="#2c2c2c" stroke-width="1.15"/><path d="M803,279.6 L803,305" stroke="#2c2c2c" stroke-width="1.15"/><path d="M803,310 L803,399" stroke="#2c2c2c" stroke-width="1.15" stroke-dasharray="15 4"/><path d="M874.4,279.6 L874.4,305" stroke="#2c2c2c" stroke-width="1.15"/><path d="M874.4,310 L874.4,399" stroke="#2c2c2c" stroke-width="1.15" stroke-dasharray="15 4"/><text x="586.7" y="257.1" font-size="7.2" fill="#1a1a1a" textLength="19.2" lengthAdjust="spacingAndGlyphs">Zone 1</text><path d="M586.4,254.6 L583,254.6 L573.8,275" stroke="#454545" stroke-width="0.8" fill="none"/><path d="M573.4,276 L575.8,272.4 L573.6,271.6Z" stroke="none" stroke-width="0" fill="#454545"/><text x="722.4" y="260.3" font-size="7.2" fill="#2a35c8" textLength="19.6" lengthAdjust="spacingAndGlyphs">Zone 2</text><path d="M722,257.8 L717.3,257.8 L707.8,278" stroke="#454545" stroke-width="0.8" fill="none"/><path d="M707.4,279 L709.8,275.4 L707.6,274.6Z" stroke="none" stroke-width="0" fill="#454545"/><text x="852.4" y="260.3" font-size="7.2" fill="#2a35c8" textLength="19.6" lengthAdjust="spacingAndGlyphs">Zone 3</text><path d="M852,257.8 L849.7,257.8 L838.9,278" stroke="#454545" stroke-width="0.8" fill="none"/><path d="M838.5,279 L840.9,275.4 L838.7,274.6Z" stroke="none" stroke-width="0" fill="#454545"/><path d="M545.5,279.6 L545.5,305" stroke="#454545" stroke-width="0.85"/><path d="M563.5,279.6 L563.5,305" stroke="#454545" stroke-width="0.85"/><path d="M576.2,279.6 L576.2,305" stroke="#454545" stroke-width="0.85"/><path d="M593.3,279.6 L593.3,305" stroke="#454545" stroke-width="0.85"/><path d="M545.5,282.4 L563.5,282.4" stroke="#454545" stroke-width="0.7"/><path d="M545.5,285.4 L563.5,285.4" stroke="#454545" stroke-width="0.7"/><path d="M549.64,283 L551.4399999999999,283 L550.54,285Z" stroke="none" stroke-width="0" fill="#454545"/><path d="M553.6,283 L555.4,283 L554.5,285Z" stroke="none" stroke-width="0" fill="#454545"/><path d="M557.5600000000001,283 L559.36,283 L558.46,285Z" stroke="none" stroke-width="0" fill="#454545"/><path d="M576.2,282.4 L593.3,282.4" stroke="#454545" stroke-width="0.7"/><path d="M576.2,285.4 L593.3,285.4" stroke="#454545" stroke-width="0.7"/><path d="M580.0880000000001,283 L581.888,283 L580.988,285Z" stroke="none" stroke-width="0" fill="#454545"/><path d="M583.85,283 L585.65,283 L584.75,285Z" stroke="none" stroke-width="0" fill="#454545"/><path d="M587.612,283 L589.4119999999999,283 L588.512,285Z" stroke="none" stroke-width="0" fill="#454545"/><path d="M537,292.3 L553.9,292.3" stroke="#454545" stroke-width="0.7"/><text x="535.6" y="298.4" font-size="4.2" fill="#2a35c8" text-anchor="middle" transform="rotate(-90 535.6 298.4)">25</text><circle cx="553.9" cy="292.3" r="1.9" stroke="#333" stroke-width="0.75" fill="none"/><path d="M548.6999999999999,292.3 L559.1,292.3" stroke="#333" stroke-width="0.75"/><path d="M553.9,287.5 L553.9,297.1" stroke="#333" stroke-width="0.75"/><circle cx="584.6" cy="292.3" r="1.9" stroke="#333" stroke-width="0.75" fill="none"/><path d="M579.4,292.3 L589.8000000000001,292.3" stroke="#333" stroke-width="0.75"/><path d="M584.6,287.5 L584.6,297.1" stroke="#333" stroke-width="0.75"/><circle cx="545.5" cy="305" r="1.9" stroke="#333" stroke-width="0.75" fill="none"/><path d="M540.3,305 L550.7,305" stroke="#333" stroke-width="0.75"/><path d="M545.5,300.2 L545.5,309.8" stroke="#333" stroke-width="0.75"/><circle cx="562.5" cy="305" r="1.9" stroke="#333" stroke-width="0.75" fill="none"/><path d="M557.3,305 L567.7,305" stroke="#333" stroke-width="0.75"/><path d="M562.5,300.2 L562.5,309.8" stroke="#333" stroke-width="0.75"/><circle cx="575.6" cy="305" r="1.9" stroke="#333" stroke-width="0.75" fill="none"/><path d="M570.4,305 L580.8000000000001,305" stroke="#333" stroke-width="0.75"/><path d="M575.6,300.2 L575.6,309.8" stroke="#333" stroke-width="0.75"/><circle cx="593.3" cy="305" r="1.9" stroke="#333" stroke-width="0.75" fill="none"/><path d="M588.0999999999999,305 L598.5,305" stroke="#333" stroke-width="0.75"/><path d="M593.3,300.2 L593.3,309.8" stroke="#333" stroke-width="0.75"/><circle cx="686.6" cy="292.3" r="1.9" stroke="#333" stroke-width="0.75" fill="none"/><path d="M681.4,292.3 L691.8000000000001,292.3" stroke="#333" stroke-width="0.75"/><path d="M686.6,287.5 L686.6,297.1" stroke="#333" stroke-width="0.75"/><circle cx="717.3" cy="292.3" r="1.9" stroke="#333" stroke-width="0.75" fill="none"/><path d="M712.0999999999999,292.3 L722.5,292.3" stroke="#333" stroke-width="0.75"/><path d="M717.3,287.5 L717.3,297.1" stroke="#333" stroke-width="0.75"/><circle cx="677.7" cy="305" r="1.9" stroke="#333" stroke-width="0.75" fill="none"/><path d="M672.5,305 L682.9000000000001,305" stroke="#333" stroke-width="0.75"/><path d="M677.7,300.2 L677.7,309.8" stroke="#333" stroke-width="0.75"/><circle cx="694.6" cy="305" r="1.9" stroke="#333" stroke-width="0.75" fill="none"/><path d="M689.4,305 L699.8000000000001,305" stroke="#333" stroke-width="0.75"/><path d="M694.6,300.2 L694.6,309.8" stroke="#333" stroke-width="0.75"/><circle cx="708.3" cy="305" r="1.9" stroke="#333" stroke-width="0.75" fill="none"/><path d="M703.0999999999999,305 L713.5,305" stroke="#333" stroke-width="0.75"/><path d="M708.3,300.2 L708.3,309.8" stroke="#333" stroke-width="0.75"/><circle cx="725.4" cy="305" r="1.9" stroke="#333" stroke-width="0.75" fill="none"/><path d="M720.1999999999999,305 L730.6,305" stroke="#333" stroke-width="0.75"/><path d="M725.4,300.2 L725.4,309.8" stroke="#333" stroke-width="0.75"/><circle cx="818.8" cy="292.3" r="1.9" stroke="#333" stroke-width="0.75" fill="none"/><path d="M813.5999999999999,292.3 L824.0,292.3" stroke="#333" stroke-width="0.75"/><path d="M818.8,287.5 L818.8,297.1" stroke="#333" stroke-width="0.75"/><circle cx="849.7" cy="292.3" r="1.9" stroke="#333" stroke-width="0.75" fill="none"/><path d="M844.5,292.3 L854.9000000000001,292.3" stroke="#333" stroke-width="0.75"/><path d="M849.7,287.5 L849.7,297.1" stroke="#333" stroke-width="0.75"/><circle cx="810.5" cy="305" r="1.9" stroke="#333" stroke-width="0.75" fill="none"/><path d="M805.3,305 L815.7,305" stroke="#333" stroke-width="0.75"/><path d="M810.5,300.2 L810.5,309.8" stroke="#333" stroke-width="0.75"/><circle cx="827.5" cy="305" r="1.9" stroke="#333" stroke-width="0.75" fill="none"/><path d="M822.3,305 L832.7,305" stroke="#333" stroke-width="0.75"/><path d="M827.5,300.2 L827.5,309.8" stroke="#333" stroke-width="0.75"/><circle cx="840.8" cy="305" r="1.9" stroke="#333" stroke-width="0.75" fill="none"/><path d="M835.5999999999999,305 L846.0,305" stroke="#333" stroke-width="0.75"/><path d="M840.8,300.2 L840.8,309.8" stroke="#333" stroke-width="0.75"/><circle cx="858.3" cy="305" r="1.9" stroke="#333" stroke-width="0.75" fill="none"/><path d="M853.0999999999999,305 L863.5,305" stroke="#333" stroke-width="0.75"/><path d="M858.3,300.2 L858.3,309.8" stroke="#333" stroke-width="0.75"/><path d="M553.9,309 L553.9,372" stroke="#4a4a4a" stroke-width="0.85" stroke-dasharray="13 5"/><path d="M553.9,372 L553.9,440" stroke="#2c2c2c" stroke-width="0.85"/><path d="M686.6,309 L686.6,372" stroke="#4a4a4a" stroke-width="0.85" stroke-dasharray="13 5"/><path d="M686.6,372 L686.6,429" stroke="#2c2c2c" stroke-width="0.85"/><path d="M584.6,309 L584.6,366" stroke="#4a4a4a" stroke-width="0.85" stroke-dasharray="13 5"/><path d="M584.6,366 L584.6,446.5" stroke="#2c2c2c" stroke-width="0.9" stroke-dasharray="8 3"/><path d="M717.3,309 L717.3,366" stroke="#4a4a4a" stroke-width="0.85" stroke-dasharray="13 5"/><path d="M717.3,366 L717.3,429.4" stroke="#2c2c2c" stroke-width="0.9" stroke-dasharray="8 3"/><path d="M571.6,305 L571.6,399" stroke="#454545" stroke-width="0.8"/><text x="570.8" y="352" font-size="4.2" fill="#454545" text-anchor="middle" transform="rotate(-90 570.8 352)">115</text><text x="570.8" y="389" font-size="4.2" fill="#454545" text-anchor="middle" transform="rotate(-90 570.8 389)">45</text><path d="M548,376.8 L572,376.8" stroke="#2c2c2c" stroke-width="0.9" stroke-dasharray="5 2"/><circle cx="553.9" cy="376.8" r="1.9" stroke="#333" stroke-width="0.75" fill="none"/><path d="M548.6999999999999,376.8 L559.1,376.8" stroke="#333" stroke-width="0.75"/><path d="M553.9,372.0 L553.9,381.6" stroke="#333" stroke-width="0.75"/><path d="M579,376.8 L590,376.8" stroke="#2c2c2c" stroke-width="0.8"/><path d="M584.6,371 L584.6,383" stroke="#2c2c2c" stroke-width="0.8"/><circle cx="553.9" cy="401.3" r="1.9" stroke="#333" stroke-width="0.75" fill="none"/><path d="M548.6999999999999,401.3 L559.1,401.3" stroke="#333" stroke-width="0.75"/><path d="M553.9,396.5 L553.9,406.1" stroke="#333" stroke-width="0.75"/><circle cx="584.6" cy="401.3" r="1.9" stroke="#333" stroke-width="0.75" fill="none"/><path d="M579.4,401.3 L589.8000000000001,401.3" stroke="#333" stroke-width="0.75"/><path d="M584.6,396.5 L584.6,406.1" stroke="#333" stroke-width="0.75"/><path d="M681,376.8 L692,376.8" stroke="#2c2c2c" stroke-width="0.8"/><circle cx="717.3" cy="376.8" r="1.9" stroke="#333" stroke-width="0.75" fill="none"/><path d="M712.0999999999999,376.8 L722.5,376.8" stroke="#333" stroke-width="0.75"/><path d="M717.3,372.0 L717.3,381.6" stroke="#333" stroke-width="0.75"/><circle cx="686.6" cy="401.3" r="1.9" stroke="#333" stroke-width="0.75" fill="none"/><path d="M681.4,401.3 L691.8000000000001,401.3" stroke="#333" stroke-width="0.75"/><path d="M686.6,396.5 L686.6,406.1" stroke="#333" stroke-width="0.75"/><circle cx="717.3" cy="401.3" r="1.9" stroke="#333" stroke-width="0.75" fill="none"/><path d="M712.0999999999999,401.3 L722.5,401.3" stroke="#333" stroke-width="0.75"/><path d="M717.3,396.5 L717.3,406.1" stroke="#333" stroke-width="0.75"/><circle cx="818.8" cy="376.8" r="2.2" stroke="#2c2c2c" stroke-width="0.8" fill="none"/><circle cx="849.7" cy="376.8" r="2.2" stroke="#2c2c2c" stroke-width="0.8" fill="none"/><circle cx="818.8" cy="401.3" r="2.2" stroke="#2c2c2c" stroke-width="0.8" fill="none"/><circle cx="849.7" cy="401.3" r="2.2" stroke="#2c2c2c" stroke-width="0.8" fill="none"/><circle cx="534.4" cy="336.3" r="1.9" stroke="#333" stroke-width="0.75" fill="none"/><path d="M529.8,336.3 L539.0,336.3" stroke="#333" stroke-width="0.75"/><path d="M534.4,331.7 L534.4,340.90000000000003" stroke="#333" stroke-width="0.75"/><circle cx="604.7" cy="336.3" r="1.9" stroke="#333" stroke-width="0.75" fill="none"/><path d="M600.1,336.3 L609.3000000000001,336.3" stroke="#333" stroke-width="0.75"/><path d="M604.7,331.7 L604.7,340.90000000000003" stroke="#333" stroke-width="0.75"/><circle cx="666.5" cy="336.3" r="1.9" stroke="#333" stroke-width="0.75" fill="none"/><path d="M661.9,336.3 L671.1,336.3" stroke="#333" stroke-width="0.75"/><path d="M666.5,331.7 L666.5,340.90000000000003" stroke="#333" stroke-width="0.75"/><circle cx="736.8" cy="336.3" r="1.9" stroke="#333" stroke-width="0.75" fill="none"/><path d="M732.1999999999999,336.3 L741.4,336.3" stroke="#333" stroke-width="0.75"/><path d="M736.8,331.7 L736.8,340.90000000000003" stroke="#333" stroke-width="0.75"/><circle cx="798.7" cy="336.3" r="1.9" stroke="#333" stroke-width="0.75" fill="none"/><path d="M794.1,336.3 L803.3000000000001,336.3" stroke="#333" stroke-width="0.75"/><path d="M798.7,331.7 L798.7,340.90000000000003" stroke="#333" stroke-width="0.75"/><circle cx="869.4" cy="336.3" r="1.9" stroke="#333" stroke-width="0.75" fill="none"/><path d="M864.8,336.3 L874.0,336.3" stroke="#333" stroke-width="0.75"/><path d="M869.4,331.7 L869.4,340.90000000000003" stroke="#333" stroke-width="0.75"/><path d="M534.4,336.5 L534.4,342.5" stroke="#454545" stroke-width="0.7"/><path d="M604.7,336.5 L604.7,342.5" stroke="#454545" stroke-width="0.7"/><path d="M534.4,341.6 L604.7,341.6" stroke="#454545" stroke-width="0.8"/><text x="566.6" y="340.4" font-size="4.2" fill="#2a35c8" text-anchor="middle">100</text><path d="M666.5,336.5 L666.5,347" stroke="#454545" stroke-width="0.7"/><path d="M736.8,336.5 L736.8,349" stroke="#454545" stroke-width="0.7"/><path d="M798.7,336.5 L798.7,349" stroke="#454545" stroke-width="0.7"/><path d="M666.5,346 L736.8,346" stroke="#454545" stroke-width="0.8"/><text x="708.3" y="345" font-size="4.2" fill="#454545" text-anchor="middle">100</text><path d="M736.8,347.8 L798.7,347.8" stroke="#555" stroke-width="1.5"/><text x="780.6" y="346" font-size="4.2" fill="#2a35c8" text-anchor="middle">36</text><path d="M803,348.4 L869.4,348.4" stroke="#454545" stroke-width="0.8"/><text x="842.4" y="347.2" font-size="4.2" fill="#454545" text-anchor="middle">100</text><circle cx="616.6" cy="288.9" r="1.9" stroke="#333" stroke-width="0.75" fill="none"/><path d="M611.4,288.9 L621.8000000000001,288.9" stroke="#333" stroke-width="0.75"/><path d="M616.6,284.09999999999997 L616.6,293.7" stroke="#333" stroke-width="0.75"/><circle cx="616.6" cy="313.8" r="1.9" stroke="#333" stroke-width="0.75" fill="none"/><path d="M611.4,313.8 L621.8000000000001,313.8" stroke="#333" stroke-width="0.75"/><path d="M616.6,309.0 L616.6,318.6" stroke="#333" stroke-width="0.75"/><circle cx="616.6" cy="359.1" r="1.9" stroke="#333" stroke-width="0.75" fill="none"/><path d="M611.4,359.1 L621.8000000000001,359.1" stroke="#333" stroke-width="0.75"/><path d="M616.6,354.3 L616.6,363.90000000000003" stroke="#333" stroke-width="0.75"/><circle cx="616.6" cy="384.2" r="1.9" stroke="#333" stroke-width="0.75" fill="none"/><path d="M611.4,384.2 L621.8000000000001,384.2" stroke="#333" stroke-width="0.75"/><path d="M616.6,379.4 L616.6,389.0" stroke="#333" stroke-width="0.75"/><circle cx="654.5" cy="288.9" r="1.9" stroke="#333" stroke-width="0.75" fill="none"/><path d="M649.3,288.9 L659.7,288.9" stroke="#333" stroke-width="0.75"/><path d="M654.5,284.09999999999997 L654.5,293.7" stroke="#333" stroke-width="0.75"/><circle cx="654.5" cy="313.8" r="1.9" stroke="#333" stroke-width="0.75" fill="none"/><path d="M649.3,313.8 L659.7,313.8" stroke="#333" stroke-width="0.75"/><path d="M654.5,309.0 L654.5,318.6" stroke="#333" stroke-width="0.75"/><circle cx="654.5" cy="359.1" r="1.9" stroke="#333" stroke-width="0.75" fill="none"/><path d="M649.3,359.1 L659.7,359.1" stroke="#333" stroke-width="0.75"/><path d="M654.5,354.3 L654.5,363.90000000000003" stroke="#333" stroke-width="0.75"/><circle cx="654.5" cy="384.2" r="1.9" stroke="#333" stroke-width="0.75" fill="none"/><path d="M649.3,384.2 L659.7,384.2" stroke="#333" stroke-width="0.75"/><path d="M654.5,379.4 L654.5,389.0" stroke="#333" stroke-width="0.75"/><circle cx="748.9" cy="288.9" r="1.9" stroke="#333" stroke-width="0.75" fill="none"/><path d="M743.6999999999999,288.9 L754.1,288.9" stroke="#333" stroke-width="0.75"/><path d="M748.9,284.09999999999997 L748.9,293.7" stroke="#333" stroke-width="0.75"/><circle cx="748.9" cy="313.8" r="1.9" stroke="#333" stroke-width="0.75" fill="none"/><path d="M743.6999999999999,313.8 L754.1,313.8" stroke="#333" stroke-width="0.75"/><path d="M748.9,309.0 L748.9,318.6" stroke="#333" stroke-width="0.75"/><circle cx="748.9" cy="359.1" r="1.9" stroke="#333" stroke-width="0.75" fill="none"/><path d="M743.6999999999999,359.1 L754.1,359.1" stroke="#333" stroke-width="0.75"/><path d="M748.9,354.3 L748.9,363.90000000000003" stroke="#333" stroke-width="0.75"/><circle cx="748.9" cy="384.2" r="1.9" stroke="#333" stroke-width="0.75" fill="none"/><path d="M743.6999999999999,384.2 L754.1,384.2" stroke="#333" stroke-width="0.75"/><path d="M748.9,379.4 L748.9,389.0" stroke="#333" stroke-width="0.75"/><circle cx="787.1" cy="288.9" r="1.9" stroke="#333" stroke-width="0.75" fill="none"/><path d="M781.9,288.9 L792.3000000000001,288.9" stroke="#333" stroke-width="0.75"/><path d="M787.1,284.09999999999997 L787.1,293.7" stroke="#333" stroke-width="0.75"/><circle cx="787.1" cy="313.8" r="1.9" stroke="#333" stroke-width="0.75" fill="none"/><path d="M781.9,313.8 L792.3000000000001,313.8" stroke="#333" stroke-width="0.75"/><path d="M787.1,309.0 L787.1,318.6" stroke="#333" stroke-width="0.75"/><circle cx="787.1" cy="359.1" r="1.9" stroke="#333" stroke-width="0.75" fill="none"/><path d="M781.9,359.1 L792.3000000000001,359.1" stroke="#333" stroke-width="0.75"/><path d="M787.1,354.3 L787.1,363.90000000000003" stroke="#333" stroke-width="0.75"/><circle cx="787.1" cy="384.2" r="1.9" stroke="#333" stroke-width="0.75" fill="none"/><path d="M781.9,384.2 L792.3000000000001,384.2" stroke="#333" stroke-width="0.75"/><path d="M787.1,379.4 L787.1,389.0" stroke="#333" stroke-width="0.75"/><path d="M584.6,271.6 L655,271.6" stroke="#454545" stroke-width="0.8"/><text x="602.8" y="270.4" font-size="4.2" fill="#454545" text-anchor="middle">65.5</text><text x="634" y="270" font-size="4.2" fill="#2a35c8" text-anchor="middle">15</text><path d="M616.8,271.6 L616.8,281" stroke="#454545" stroke-width="0.8"/><path d="M616.8,279.6 L655,279.6" stroke="#454545" stroke-width="0.8"/><text x="628.4" y="278.6" font-size="4.2" fill="#2a35c8" text-anchor="middle">40</text><text x="648.4" y="278.6" font-size="4.2" fill="#454545" text-anchor="middle">40</text><path d="M650,270 L654.5,270" stroke="#454545" stroke-width="0.8"/><path d="M654.5,270 L654.5,281" stroke="#454545" stroke-width="0.8"/><path d="M623.4,313.8 L623.4,332.4" stroke="#454545" stroke-width="0.8"/><path d="M616.6,313.8 L624.4,313.8" stroke="#454545" stroke-width="0.7"/><text x="622.2" y="322.4" font-size="4.2" fill="#2a35c8" text-anchor="middle" transform="rotate(-90 622.2 322.4)">15</text><circle cx="635.5" cy="332.4" r="8.5" stroke="#2c2c2c" stroke-width="0.95" fill="none"/><path d="M635.5,324 L635.5,341" stroke="#2c2c2c" stroke-width="0.9"/><circle cx="768" cy="332.4" r="8.5" stroke="#2c2c2c" stroke-width="0.95" fill="none"/><path d="M768,324 L768,341" stroke="#2c2c2c" stroke-width="0.9"/><path d="M611.8,332.4 L644.4,332.4" stroke="#2c2c2c" stroke-width="0.9"/><path d="M759.4,332.4 L776.6,332.4" stroke="#2c2c2c" stroke-width="0.9"/><path d="M612.9,332.4 L612.9,359" stroke="#454545" stroke-width="0.8"/><text x="612" y="347" font-size="4.2" fill="#454545" text-anchor="middle" transform="rotate(-90 612 347)">50</text><path d="M640.5,332.4 L640.5,454.7" stroke="#454545" stroke-width="0.85"/><path d="M634.7,374.6 L640.2,374.6 L640.2,382.8 L634.7,382.8Z" stroke="#454545" stroke-width="0.55" fill="none"/><text x="638.8" y="378.8" font-size="3.8" fill="#454545" text-anchor="middle" transform="rotate(-90 638.8 378.8)">55</text><path d="M616.6,384.2 L616.6,400" stroke="#454545" stroke-width="0.7"/><path d="M654.5,384.2 L654.5,400" stroke="#454545" stroke-width="0.7"/><path d="M616.6,399 L654.5,399" stroke="#2a35c8" stroke-width="0.8"/><text x="632.4" y="398" font-size="4.2" fill="#2a35c8" text-anchor="middle">35</text><path d="M659.4,303.6 L659.4,385" stroke="#2a35c8" stroke-width="0.7"/><text x="658.2" y="308" font-size="3.8" fill="#2a35c8" text-anchor="middle" transform="rotate(-90 658.2 308)">20</text><text x="658.2" y="323" font-size="3.8" fill="#2a35c8" text-anchor="middle" transform="rotate(-90 658.2 323)">15</text><text x="658.2" y="348" font-size="3.8" fill="#2a35c8" text-anchor="middle" transform="rotate(-90 658.2 348)">25</text><text x="658.2" y="376" font-size="3.8" fill="#2a35c8" text-anchor="middle" transform="rotate(-90 658.2 376)">25</text><path d="M659.4,336.3 L666.5,336.3" stroke="#2a35c8" stroke-width="0.8"/><path d="M666.6,336.3 L666.6,346.5" stroke="#454545" stroke-width="0.7"/><circle cx="548.8" cy="433" r="1.9" stroke="#333" stroke-width="0.75" fill="none"/><path d="M544.1999999999999,433 L553.4,433" stroke="#333" stroke-width="0.75"/><path d="M548.8,428.2 L548.8,437.8" stroke="#333" stroke-width="0.75"/><circle cx="559.4" cy="433" r="1.9" stroke="#333" stroke-width="0.75" fill="none"/><path d="M554.8,433 L564.0,433" stroke="#333" stroke-width="0.75"/><path d="M559.4,428.2 L559.4,437.8" stroke="#333" stroke-width="0.75"/><circle cx="579.5" cy="433" r="1.9" stroke="#333" stroke-width="0.75" fill="none"/><path d="M574.9,433 L584.1,433" stroke="#333" stroke-width="0.75"/><path d="M579.5,428.2 L579.5,437.8" stroke="#333" stroke-width="0.75"/><circle cx="590" cy="433" r="1.9" stroke="#333" stroke-width="0.75" fill="none"/><path d="M585.4,433 L594.6,433" stroke="#333" stroke-width="0.75"/><path d="M590,428.2 L590,437.8" stroke="#333" stroke-width="0.75"/><circle cx="681.2" cy="433" r="1.9" stroke="#333" stroke-width="0.75" fill="none"/><path d="M676.6,433 L685.8000000000001,433" stroke="#333" stroke-width="0.75"/><path d="M681.2,428.2 L681.2,437.8" stroke="#333" stroke-width="0.75"/><circle cx="691.6" cy="433" r="1.9" stroke="#333" stroke-width="0.75" fill="none"/><path d="M687.0,433 L696.2,433" stroke="#333" stroke-width="0.75"/><path d="M691.6,428.2 L691.6,437.8" stroke="#333" stroke-width="0.75"/><circle cx="711.7" cy="433" r="1.9" stroke="#333" stroke-width="0.75" fill="none"/><path d="M707.1,433 L716.3000000000001,433" stroke="#333" stroke-width="0.75"/><path d="M711.7,428.2 L711.7,437.8" stroke="#333" stroke-width="0.75"/><circle cx="722.4" cy="433" r="1.9" stroke="#333" stroke-width="0.75" fill="none"/><path d="M717.8,433 L727.0,433" stroke="#333" stroke-width="0.75"/><path d="M722.4,428.2 L722.4,437.8" stroke="#333" stroke-width="0.75"/><circle cx="813.5" cy="433" r="1.9" stroke="#333" stroke-width="0.75" fill="none"/><path d="M808.9,433 L818.1,433" stroke="#333" stroke-width="0.75"/><path d="M813.5,428.2 L813.5,437.8" stroke="#333" stroke-width="0.75"/><circle cx="824.1" cy="433" r="1.9" stroke="#333" stroke-width="0.75" fill="none"/><path d="M819.5,433 L828.7,433" stroke="#333" stroke-width="0.75"/><path d="M824.1,428.2 L824.1,437.8" stroke="#333" stroke-width="0.75"/><circle cx="844.2" cy="433" r="1.9" stroke="#333" stroke-width="0.75" fill="none"/><path d="M839.6,433 L848.8000000000001,433" stroke="#333" stroke-width="0.75"/><path d="M844.2,428.2 L844.2,437.8" stroke="#333" stroke-width="0.75"/><circle cx="854.7" cy="433" r="1.9" stroke="#333" stroke-width="0.75" fill="none"/><path d="M850.1,433 L859.3000000000001,433" stroke="#333" stroke-width="0.75"/><path d="M854.7,428.2 L854.7,437.8" stroke="#333" stroke-width="0.75"/><path d="M548.8,433 L548.8,450" stroke="#454545" stroke-width="0.7"/><path d="M559.4,433 L559.4,450" stroke="#454545" stroke-width="0.7"/><path d="M579.5,433 L579.5,450" stroke="#454545" stroke-width="0.7"/><path d="M590,433 L590,450" stroke="#454545" stroke-width="0.7"/><path d="M548.8,448.7 L590,448.7" stroke="#2a35c8" stroke-width="0.8"/><text x="554" y="447.6" font-size="4.2" fill="#2a35c8" text-anchor="middle">25</text><text x="569.5" y="447.6" font-size="4.2" fill="#2a35c8" text-anchor="middle">40</text><text x="585.1" y="447.6" font-size="4.2" fill="#2a35c8" text-anchor="middle">25</text><path d="M538.3,433 L548,433" stroke="#454545" stroke-width="0.7"/><path d="M538.3,433 L538.3,454.7" stroke="#454545" stroke-width="0.8"/><text x="537.4" y="444" font-size="4.2" fill="#2a35c8" text-anchor="middle" transform="rotate(-90 537.4 444)">34</text><path d="M523.9,421.4 L523.9,454.7" stroke="#454545" stroke-width="0.8"/><path d="M523.9,421.4 L526,421.4" stroke="#454545" stroke-width="0.7"/><text x="522.4" y="432.6" font-size="4.2" fill="#454545" text-anchor="middle" transform="rotate(-90 522.4 432.6)">41</text><text x="506.2" y="439" font-size="4.2" fill="#454545" text-anchor="middle">35</text><path d="M504.8,440 L514.3,440" stroke="#454545" stroke-width="0.7"/><path d="M514.3,434 L514.3,442" stroke="#454545" stroke-width="0.7"/><path d="M498.2,432 L512.4,432" stroke="#454545" stroke-width="0.8"/><path d="M498.8,432 L498.8,454.7" stroke="#454545" stroke-width="0.8"/><path d="M495.8,440.5 L500.8,440.5 L500.8,448 L495.8,448Z" stroke="#2a35c8" stroke-width="0.55" fill="none"/><text x="499.6" y="444.2" font-size="3.8" fill="#2a35c8" text-anchor="middle" transform="rotate(-90 499.6 444.2)">62</text><text x="542.4" y="418.6" font-size="3.8" fill="#2a35c8" text-anchor="middle">Ø10.5</text><path d="M548.5,419.8 L559.5,419.8" stroke="#454545" stroke-width="0.7"/><path d="M559.1,419.8 L559.1,433" stroke="#454545" stroke-width="0.7"/><text x="566.4" y="420" font-size="3.8" fill="#454545" text-anchor="middle">10.5</text><path d="M458.4,454.7 L904.4,454.7" stroke="#454545" stroke-width="0.9"/><path d="M531,427 L531,464.4" stroke="#454545" stroke-width="0.85"/><path d="M510.5,462.5 L667.1,462.5" stroke="#454545" stroke-width="0.8"/><text x="520.4" y="461.4" font-size="4.2" fill="#454545" text-anchor="middle">50</text><text x="594" y="461.4" font-size="4.2" fill="#454545" text-anchor="middle">225</text><path d="M667.1,427 L667.1,463.4" stroke="#454545" stroke-width="0.85"/><path d="M803.4,427 L803.4,446.2" stroke="#454545" stroke-width="0.85"/><path d="M667.1,445.1 L803.4,445.1" stroke="#454545" stroke-width="0.8"/><text x="733.4" y="444" font-size="4.2" fill="#2a35c8" text-anchor="middle">225</text><text x="436.8" y="478.6" font-size="6.5" fill="#2c3550" textLength="78.2" lengthAdjust="spacingAndGlyphs">Material SS 8mm Thickness</text><text x="437" y="486.6" font-size="6.5" fill="#2c3550" textLength="35" lengthAdjust="spacingAndGlyphs">Qty  01 Nos.</text><path d="M531.4,469.6 L531.4,475.6" stroke="#1a1a1a" stroke-width="1"/><circle cx="531.4" cy="477.4" r="0.6" stroke="#1a1a1a" stroke-width="0.4" fill="#1a1a1a"/><text x="535.6" y="477" font-size="6.5" fill="#2c3550" textLength="172.8" lengthAdjust="spacingAndGlyphs">Note :-  Dimension of Zone  2  &amp;  Zone 3 Are Equal  To Zone 1</text><path d="M597.4,478.4 L617.4,478.4" stroke="#2c3550" stroke-width="0.6"/><path d="M628.6,478.4 L648,478.4" stroke="#2c3550" stroke-width="0.6"/><path d="M689.2,478.4 L708.4,478.4" stroke="#2c3550" stroke-width="0.6"/><text x="529.3" y="485" font-size="6.5" fill="#2c3550" textLength="105" lengthAdjust="spacingAndGlyphs">And Unspecified Hole Dia = 10.25mm</text><text x="597" y="494.6" font-size="6.5" fill="#1a1a1a" textLength="63.4" lengthAdjust="spacingAndGlyphs">CONTROLLED COPY</text><path d="M727.7,461.3 L946.8,461.3" stroke="#454545" stroke-width="0.9"/><path d="M727.7,461.3 L727.7,498.8" stroke="#454545" stroke-width="0.9"/><path d="M727.7,473 L946.8,473" stroke="#454545" stroke-width="0.9"/><path d="M768.5,461.3 L768.5,473" stroke="#454545" stroke-width="0.9"/><path d="M800.6,461.3 L800.6,473" stroke="#454545" stroke-width="0.9"/><path d="M849.6,461.3 L849.6,473" stroke="#454545" stroke-width="0.9"/><path d="M881.7,461.3 L881.7,473" stroke="#454545" stroke-width="0.9"/><path d="M920.5,461.3 L920.5,473" stroke="#454545" stroke-width="0.9"/><path d="M824,473 L824,498.8" stroke="#454545" stroke-width="0.9"/><path d="M824,485.4 L946.8,485.4" stroke="#454545" stroke-width="0.9"/><path d="M901.4,485.4 L901.4,498.8" stroke="#454545" stroke-width="0.9"/><path d="M920.5,485.4 L920.5,498.8" stroke="#454545" stroke-width="0.9"/><text x="729" y="464.6" font-size="3.2" fill="#454545">Dwn by</text><text x="770" y="464.6" font-size="3.2" fill="#454545">Checked by</text><text x="802" y="464.6" font-size="3.2" fill="#454545" textLength="30" lengthAdjust="spacingAndGlyphs">Approved by - date</text><text x="883" y="464.6" font-size="3.2" fill="#454545">Date</text><text x="903.6" y="488.6" font-size="3" fill="#454545">A3/Size</text><text x="927" y="488.6" font-size="3" fill="#454545">Sheet</text><text x="933.6" y="494.2" font-size="4.4" fill="#1a1a1a" text-anchor="middle" font-weight="bold">N</text><path d="M853.4,464 L860.8,465.4 L860.8,469 L853.4,470.4Z" stroke="#454545" stroke-width="0.8" fill="none"/><path d="M860.8,467.2 L868,467.2" stroke="#454545" stroke-width="0.7"/><circle cx="872.4" cy="467.1" r="3.9" stroke="#2c2c2c" stroke-width="0.85" fill="none"/><circle cx="872.4" cy="467.1" r="2.2" stroke="#454545" stroke-width="0.6" fill="none"/><path d="M867.6,467.1 L877.2,467.1" stroke="#454545" stroke-width="0.6"/><path d="M872.4,462.4 L872.4,471.8" stroke="#454545" stroke-width="0.6"/><text x="775.8" y="484.2" font-size="6" fill="#333" text-anchor="middle" textLength="73.6" lengthAdjust="spacingAndGlyphs">GSC Toughened Glass Pvt Ltd</text><text x="776.3" y="491" font-size="6" fill="#333" text-anchor="middle" textLength="55.8" lengthAdjust="spacingAndGlyphs">C-50, Sector-57, Noida</text><text x="885.2" y="481.2" font-size="6" fill="#333" text-anchor="middle" textLength="26.4" lengthAdjust="spacingAndGlyphs">Base Plate</text><text x="863" y="494.4" font-size="6" fill="#333" text-anchor="middle" textLength="39.4" lengthAdjust="spacingAndGlyphs">VW252-02-0142</text></svg>
<svg class="a" style="left:0px;top:0px;" width="996" height="567" viewBox="0 0 996 567"><g fill="none" stroke="#3f51c9" stroke-width="1.05"><path d="M251.6,444.6 L251.6,500.2 L283.8,500.2Z"/><path d="M251.6,495 L257,495 L257,500.2"/><path d="M253.6,459.4 L256.7,462.6 L259.4,457.6 M256.7,462.6 L256.4,467.2"/><path d="M272.4,493 L278.4,499 M278.2,492.8 L272.4,499.2"/></g></svg>
<div class="a" style="left:962.40px;top:128.70px;width:8.20px;height:2.70px;background:#e6e6e6;border-radius:0.6px;"></div>
<svg class="a" style="left:975.4px;top:123.4px;" width="10" height="10" viewBox="0 0 10 10"><rect x="1.4" y="3" width="5.6" height="5.4" fill="none" stroke="#e6e6e6" stroke-width="2"/><path d="M3.6,1.2 L8.6,1.2 L8.6,6" fill="none" stroke="#e6e6e6" stroke-width="1.5"/></svg>
<svg class="a" style="left:987.4px;top:124.6px;" width="9" height="8" viewBox="0 0 9 8"><path d="M1.2,1.2 L8.2,7 M8.2,1.2 L1.2,7" stroke="#e6e6e6" stroke-width="2.1"/></svg>
<div class="a" style="left:0.00px;top:117.60px;width:234.00px;height:429.60px;background:#3a4351;"></div>
<div class="a" style="left:234.00px;top:117.60px;width:10.00px;height:429.60px;background:#2d3542;"></div>
<div class="a" style="left:6.00px;top:364.00px;width:227.00px;height:8.50px;background:#2c3340;"></div>
<svg class="a" style="left:223.8px;top:366.08px;" width="4.4" height="2.8600000000000003" viewBox="0 0 4.4 2.8600000000000003"><path d="M0,0 L4.4,0 L2.2,2.75Z" fill="#dfe2e6"/></svg>
<span class="t" style="left:143px;top:375px;font-size:8.8px;line-height:12.32px;color:#98a0ac;transform:translate(0.00px,0.04px) rotate(0.03deg) scaleX(0.8494);">yColor</span>
<div class="a" style="left:18.00px;top:387.80px;width:215.00px;height:0.80px;background:#414a58;"></div>
<span class="t" style="left:143px;top:388px;font-size:8.8px;line-height:12.32px;color:#e2e4e8;transform:translate(0.60px,0.64px) rotate(0.03deg) scaleX(0.9331);">one</span>
<div class="a" style="left:18.00px;top:401.40px;width:215.00px;height:0.80px;background:#414a58;"></div>
<span class="t" style="left:21px;top:402px;font-size:8.8px;line-height:12.32px;color:#d3d7dd;transform:translate(0.70px,0.14px) rotate(0.03deg) scaleX(0.9156);">Plot table attached to</span>
<span class="t" style="left:138px;top:402px;font-size:8.8px;line-height:12.32px;color:#8790a0;transform:translate(0.00px,0.14px) rotate(0.03deg) scaleX(0.8223);">Base Plate</span>
<div class="a" style="left:18.00px;top:414.90px;width:215.00px;height:0.80px;background:#414a58;"></div>
<span class="t" style="left:21px;top:415px;font-size:8.8px;line-height:12.32px;color:#d3d7dd;transform:translate(0.70px,0.84px) rotate(0.03deg) scaleX(0.9019);">Plot table type</span>
<span class="t" style="left:138px;top:415px;font-size:8.8px;line-height:12.32px;color:#8790a0;transform:translate(0.00px,0.84px) rotate(0.03deg) scaleX(0.9100);">Not available</span>
<div class="a" style="left:18.00px;top:428.60px;width:215.00px;height:0.80px;background:#414a58;"></div>
<div class="a" style="left:6.00px;top:431.60px;width:227.00px;height:13.00px;background:#2c3340;"></div>
<span class="t" style="left:10px;top:432px;font-size:8.8px;line-height:12.32px;color:#ffffff;font-weight:bold;transform:translate(0.00px,0.14px) rotate(0.03deg) scaleX(0.8645);">View</span>
<svg class="a" style="left:223.6px;top:436.96px;" width="4.8" height="3.12" viewBox="0 0 4.8 3.12"><path d="M0,0 L4.8,0 L2.4,3.0Z" fill="#eef0f2"/></svg>
<span class="t" style="left:21px;top:445px;font-size:8.8px;line-height:12.32px;color:#d3d7dd;transform:translate(0.70px,0.74px) rotate(0.03deg) scaleX(0.8523);">Center X</span>
<span class="t" style="left:138px;top:445px;font-size:8.8px;line-height:12.32px;color:#8790a0;transform:translate(0.00px,0.74px) rotate(0.03deg) scaleX(0.8364);">159.0305</span>
<div class="a" style="left:18.00px;top:458.50px;width:215.00px;height:0.80px;background:#414a58;"></div>
<span class="t" style="left:21px;top:459px;font-size:8.8px;line-height:12.32px;color:#d3d7dd;transform:translate(0.70px,0.64px) rotate(0.03deg) scaleX(0.8562);">Center Y</span>
<span class="t" style="left:138px;top:459px;font-size:8.8px;line-height:12.32px;color:#8790a0;transform:translate(0.00px,0.64px) rotate(0.03deg) scaleX(0.8364);">153.3879</span>
<div class="a" style="left:18.00px;top:472.40px;width:215.00px;height:0.80px;background:#414a58;"></div>
<span class="t" style="left:21px;top:473px;font-size:8.8px;line-height:12.32px;color:#d3d7dd;transform:translate(0.70px,0.04px) rotate(0.03deg) scaleX(0.8646);">Center Z</span>
<span class="t" style="left:138px;top:473px;font-size:8.8px;line-height:12.32px;color:#8790a0;transform:translate(0.00px,0.04px) rotate(0.03deg) scaleX(0.8248);">0.0000</span>
<div class="a" style="left:18.00px;top:485.80px;width:215.00px;height:0.80px;background:#414a58;"></div>
<span class="t" style="left:21px;top:487px;font-size:8.8px;line-height:12.32px;color:#d3d7dd;transform:translate(0.70px,0.14px) rotate(0.03deg) scaleX(0.9159);">Height</span>
<span class="t" style="left:138px;top:487px;font-size:8.8px;line-height:12.32px;color:#8790a0;transform:translate(0.00px,0.14px) rotate(0.03deg) scaleX(0.8364);">301.2142</span>
<div class="a" style="left:18.00px;top:499.90px;width:215.00px;height:0.80px;background:#414a58;"></div>
<span class="t" style="left:21px;top:500px;font-size:8.8px;line-height:12.32px;color:#d3d7dd;transform:translate(0.70px,0.84px) rotate(0.03deg) scaleX(0.9336);">Width</span>
<span class="t" style="left:138px;top:500px;font-size:8.8px;line-height:12.32px;color:#8790a0;transform:translate(0.00px,0.84px) rotate(0.03deg) scaleX(0.8364);">741.0642</span>
<div class="a" style="left:18.00px;top:513.60px;width:215.00px;height:0.80px;background:#414a58;"></div>
<div class="a" style="left:6.00px;top:516.00px;width:227.00px;height:13.40px;background:#2c3340;"></div>
<span class="t" style="left:10px;top:516px;font-size:8.8px;line-height:12.32px;color:#ffffff;font-weight:bold;transform:translate(0.00px,0.84px) rotate(0.03deg) scaleX(0.8485);">Misc</span>
<svg class="a" style="left:223.6px;top:521.56px;" width="4.8" height="3.12" viewBox="0 0 4.8 3.12"><path d="M0,0 L4.8,0 L2.4,3.0Z" fill="#eef0f2"/></svg>
<div class="a" style="left:18px;top:531px;width:215px;height:3.4px;overflow:hidden"><span class="t" style="left:3.7px;top:-0.5px;font-size:8.8px;line-height:12px;color:#c3c8cf">Annotation scale</span><span class="t" style="left:120px;top:-0.5px;font-size:8.8px;line-height:12px;color:#c3c8cf">1:1</span></div>
<div class="a" style="left:0.00px;top:364.00px;width:141.40px;height:37.00px;background:#3a4351;"></div>
<div class="a" style="left:141.00px;top:375.00px;width:1.00px;height:27.00px;background:#b4bac3;"></div>
<div class="a" style="left:0.00px;top:400.60px;width:142.00px;height:1.60px;background:#353d4a;"></div>
<div class="a" style="left:9.40px;top:364.00px;width:9.00px;height:37.00px;background:#363e4b;"></div>
<div class="a" style="left:18.30px;top:364.00px;width:116.50px;height:28.00px;background:#3d4655;border:1px solid #333b48;box-sizing:border-box;"></div>
<div class="a" style="left:0.00px;top:364.00px;width:10.60px;height:37.00px;background:#3a4351;"></div>
<span class="t" style="left:-9.4px;top:367px;font-size:8.8px;line-height:10px;color:#e6e8ec;transform:rotate(-90deg);transform-origin:50% 50%;">SHEE</span>
<svg class="a" style="left:0px;top:390px;" width="11" height="13" viewBox="0 0 11 13"><path d="M1,4 L5,1 L9.6,8 L5.6,11.6Z" fill="#dadde2"/><path d="M1,4 L1,8 L5.6,11.6" fill="none" stroke="#9aa1ab" stroke-width="1"/></svg>
<svg class="a" style="left:22.5px;top:364.5px;" width="7" height="7" viewBox="0 0 7 7"><rect x="0.5" y="0.5" width="5.6" height="5.6" fill="none" stroke="#8a93a0" stroke-width="0.8"/><path d="M1.8,3.3 L4.8,3.3" stroke="#aab0ba" stroke-width="0.8"/></svg>
<svg class="a" style="left:32px;top:363.6px;" width="11" height="10" viewBox="0 0 11 10"><rect x="1" y="0.6" width="8.4" height="5.6" fill="#aab0ba"/><rect x="2.2" y="1.6" width="6" height="3.4" fill="#5b6474"/><rect x="0.4" y="6.8" width="10" height="2" fill="#d0d4da"/></svg>
<span class="t" style="left:44px;top:361px;font-size:8.8px;line-height:12.32px;color:#a4abb6;transform:translate(0.80px,0.04px) rotate(0.03deg) scaleX(0.8911);">Details and Fabrication</span>
<svg class="a" style="left:0px;top:0px;" width="996" height="567" viewBox="0 0 996 567"><path d="M37.6,373 L37.6,379 L43,379" fill="none" stroke="#6d7684" stroke-width="0.8"/></svg>
<svg class="a" style="left:43.8px;top:372.6px;" width="11" height="11.4" viewBox="0 0 11 11.4"><rect x="0.4" y="0.4" width="10.2" height="10.6" fill="#f1f2f4"/><path d="M1.6,1.6 L1.6,9.8 L9,9.8Z" fill="#252b36"/><path d="M6,1.6 L9.4,1.6 L9.4,5" fill="none" stroke="#8a93a0" stroke-width="0.8"/></svg>
<span class="t" style="left:57px;top:372px;font-size:8.8px;line-height:12.32px;color:#e7e9ed;transform:translate(0.70px,0.84px) rotate(0.03deg) scaleX(0.8764);">15 - Washer Top Cove</span>
<div class="a" style="left:244.00px;top:507.60px;width:752.00px;height:3.60px;background:#3a4250;"></div>
<div class="a" style="left:244.00px;top:511.00px;width:752.00px;height:20.00px;background:#c9c9c9;"></div>
<div class="a" style="left:244.00px;top:530.90px;width:752.00px;height:13.30px;background:#ffffff;"></div>
<div class="a" style="left:244.00px;top:510.00px;width:16.40px;height:37.40px;background:#3a4250;"></div>
<div class="a" style="left:246.40px;top:514.00px;width:1.20px;height:1.20px;background:#d7dae0;"></div>
<div class="a" style="left:246.40px;top:516.40px;width:1.20px;height:1.20px;background:#d7dae0;"></div>
<div class="a" style="left:248.50px;top:514.00px;width:1.20px;height:1.20px;background:#d7dae0;"></div>
<div class="a" style="left:248.50px;top:516.40px;width:1.20px;height:1.20px;background:#d7dae0;"></div>
<div class="a" style="left:250.60px;top:514.00px;width:1.20px;height:1.20px;background:#d7dae0;"></div>
<div class="a" style="left:250.60px;top:516.40px;width:1.20px;height:1.20px;background:#d7dae0;"></div>
<div class="a" style="left:252.70px;top:514.00px;width:1.20px;height:1.20px;background:#d7dae0;"></div>
<div class="a" style="left:252.70px;top:516.40px;width:1.20px;height:1.20px;background:#d7dae0;"></div>
<div class="a" style="left:254.80px;top:514.00px;width:1.20px;height:1.20px;background:#d7dae0;"></div>
<div class="a" style="left:254.80px;top:516.40px;width:1.20px;height:1.20px;background:#d7dae0;"></div>
<div class="a" style="left:256.90px;top:514.00px;width:1.20px;height:1.20px;background:#d7dae0;"></div>
<div class="a" style="left:256.90px;top:516.40px;width:1.20px;height:1.20px;background:#d7dae0;"></div>
<svg class="a" style="left:247.6px;top:522px;" width="8" height="8" viewBox="0 0 8 8"><path d="M1,1 L7,7 M7,1 L1,7" stroke="#f2f3f5" stroke-width="1.5"/></svg>
<svg class="a" style="left:247px;top:533.4px;" width="10" height="10" viewBox="0 0 10 10"><path d="M1.2,8.8 L5.4,4.6" stroke="#f2f3f5" stroke-width="1.9" stroke-linecap="round"/><path d="M7.6,0.8 L5.8,2.6 L6,4.2 L7.6,4.4 L9.4,2.6" fill="none" stroke="#f2f3f5" stroke-width="1.5" stroke-linejoin="round"/></svg>
<span class="t" style="left:262px;top:509px;font-size:8.6px;line-height:12.04px;color:#1c1c1c;font-family:'Liberation Mono',monospace;transform:translate(0.00px,0.58px) rotate(0.03deg) scaleX(0.8720);">Command:</span>
<span class="t" style="left:262px;top:519px;font-size:8.6px;line-height:12.04px;color:#1c1c1c;font-family:'Liberation Mono',monospace;transform:translate(0.00px,0.98px) rotate(0.03deg) scaleX(0.8720);">Command:</span>
<svg class="a" style="left:262.6px;top:532.6px;" width="11" height="9" viewBox="0 0 11 9"><rect x="0.5" y="0.5" width="9.6" height="7.6" fill="#f4f4f4" stroke="#6a6a6a" stroke-width="0.9"/><rect x="0.5" y="0.5" width="9.6" height="2" fill="#7a7a7a"/></svg>
<svg class="a" style="left:274.7px;top:536.58px;" width="3.4" height="2.21" viewBox="0 0 3.4 2.21"><path d="M0,0 L3.4,0 L1.7,2.125Z" fill="#444"/></svg>
<span class="t" style="left:281px;top:532px;font-size:8.6px;line-height:12.04px;color:#1c1c1c;font-family:'Liberation Mono',monospace;transform:translate(0.00px,0.38px) rotate(0.03deg) scaleX(0.8914);">_PLOT</span>
<div class="a" style="left:0.00px;top:543.80px;width:996.00px;height:4.00px;background:#363e4b;"></div>
<div class="a" style="left:0.00px;top:547.30px;width:996.00px;height:18.20px;background:#212733;"></div>
<div class="a" style="left:0.00px;top:565.40px;width:996.00px;height:1.60px;background:#3a4250;"></div>
<svg class="a" style="left:3px;top:550px;" width="13" height="12" viewBox="0 0 13 12"><path d="M1.4,2.2 L12,2.2 M1.4,5.8 L12,5.8 M1.4,9.4 L12,9.4" stroke="#e6e8ec" stroke-width="1.4"/></svg>
<svg class="a" style="left:0px;top:0px;" width="996" height="567" viewBox="0 0 996 567"><path d="M22,562 L26,550" stroke="#4d5564" stroke-width="0.9"/></svg>
<span class="t" style="left:32px;top:550px;font-size:8.8px;line-height:12.32px;color:#b4bac4;transform:translate(0.50px,0.04px) rotate(0.03deg) scaleX(0.9554);">Model</span>
<svg class="a" style="left:58px;top:547.3px" width="64" height="18.2" viewBox="0 0 64 18.2"><path d="M0,18.2 L6.4,0 L62,0 L55.4,18.2Z" fill="#3a4351"/></svg>
<span class="t" style="left:70px;top:550px;font-size:8.8px;line-height:12.32px;color:#ffffff;font-weight:bold;transform:translate(0.80px,0.04px) rotate(0.03deg) scaleX(0.8469);">Base Plate</span>
<svg class="a" style="left:125px;top:551px;" width="10" height="10" viewBox="0 0 10 10"><path d="M5,0.6 L5,9.4 M0.6,5 L9.4,5" stroke="#eef0f2" stroke-width="1.3"/></svg>
<svg class="a" style="left:0px;top:0px;" width="996" height="567" viewBox="0 0 996 567"><path d="M141.6,562 L145.6,550" stroke="#4d5564" stroke-width="0.9"/></svg>
<div class="a" style="left:651.20px;top:548.00px;width:26.80px;height:17.40px;background:#303846;"></div>
<span class="t" style="left:653px;top:550px;font-size:8.6px;line-height:12.04px;color:#f1f2f4;transform:translate(0.00px,0.78px) rotate(0.03deg) scaleX(0.8135);">PAPER</span>
<svg class="a" style="left:682px;top:549px;" width="14" height="14" viewBox="0 0 14 14"><path d="M2.6,2 L2.6,7 M0.4,4.6 L5,4.6" stroke="#d9dce1" stroke-width="1"/><rect x="5" y="7.4" width="6.6" height="2.6" fill="#d9dce1"/><circle cx="4" cy="8.8" r="1" fill="#d9dce1"/></svg>
<svg class="a" style="left:697px;top:549px;" width="14" height="14" viewBox="0 0 14 14"><path d="M1.6,1.4 L1.6,12.2 L12,12.2" fill="none" stroke="#d9dce1" stroke-width="1.2"/><path d="M1.6,9 L4.6,9 L4.6,12.2" fill="none" stroke="#d9dce1" stroke-width="0.9"/></svg>
<svg class="a" style="left:712px;top:549px;" width="14" height="14" viewBox="0 0 14 14"><circle cx="7" cy="7.8" r="4.2" fill="none" stroke="#9ba2ad" stroke-width="1"/><path d="M7,7.8 L11.6,3.6 M7,7.8 L12.6,7.8" stroke="#9ba2ad" stroke-width="1"/></svg>
<svg class="a" style="left:730.5px;top:555.94px;" width="4.2" height="2.7300000000000004" viewBox="0 0 4.2 2.7300000000000004"><path d="M0,0 L4.2,0 L2.1,2.625Z" fill="#d9dce1"/></svg>
<svg class="a" style="left:741px;top:549px;" width="10" height="14" viewBox="0 0 10 14"><path d="M3,2 L7.4,12 M7.4,2 L4.4,8.6" stroke="#596272" stroke-width="1"/></svg>
<svg class="a" style="left:756.5px;top:555.94px;" width="4.2" height="2.7300000000000004" viewBox="0 0 4.2 2.7300000000000004"><path d="M0,0 L4.2,0 L2.1,2.625Z" fill="#d9dce1"/></svg>
<div class="a" style="left:765.20px;top:549.20px;width:14.80px;height:14.40px;background:#5b8fd0;"></div>
<svg class="a" style="left:765.2px;top:549.2px;" width="15" height="14.4" viewBox="0 0 15 14.4"><path d="M2.6,11.6 L12,3" stroke="#f4f6f9" stroke-width="1.2"/><path d="M2.6,11.6 L11,11.6" stroke="#dfe8f5" stroke-width="0.8"/><path d="M7.6,11.4 A5,5 0 0 0 6.4,8.2" fill="none" stroke="#dfe8f5" stroke-width="0.8"/></svg>
<div class="a" style="left:781.00px;top:549.20px;width:14.80px;height:14.40px;background:#5b8fd0;"></div>
<svg class="a" style="left:781px;top:549.2px;" width="15" height="14.4" viewBox="0 0 15 14.4"><rect x="3.4" y="3.6" width="9" height="8" fill="none" stroke="#f4f6f9" stroke-width="1.1"/><rect x="2" y="2.2" width="2.8" height="2.8" fill="#5b8fd0" stroke="#f4f6f9" stroke-width="0.9"/></svg>
<svg class="a" style="left:799.5px;top:555.94px;" width="4.2" height="2.7300000000000004" viewBox="0 0 4.2 2.7300000000000004"><path d="M0,0 L4.2,0 L2.1,2.625Z" fill="#d9dce1"/></svg>
<svg class="a" style="left:809px;top:550px;" width="12" height="12" viewBox="0 0 12 12"><path d="M1,2.4 L11,2.4 M1,6 L11,6 M1,9.6 L11,9.6" stroke="#d9dce1" stroke-width="1.5"/><path d="M4.6,1.4 L4.6,10.6" stroke="#212733" stroke-width="0.9"/></svg>
<div class="a" style="left:822.00px;top:548.00px;width:1.00px;height:17.00px;background:#161b24;"></div>
<svg class="a" style="left:826px;top:549.6px;" width="13" height="13" viewBox="0 0 13 13"><rect x="1.6" y="1.6" width="9.8" height="9.8" fill="none" stroke="#d9dce1" stroke-width="0.9" stroke-dasharray="2.2 1.2"/><rect x="4" y="4" width="5" height="5" fill="none" stroke="#9ba2ad" stroke-width="0.9"/></svg>
<svg class="a" style="left:842.4px;top:549.8px;" width="12" height="13" viewBox="0 0 12 13"><path d="M5.6,1 L6.6,7 M6.2,6.4 L1.6,11.6 M6.2,6.4 L10.8,11.6" stroke="#f0f2f5" stroke-width="1.7" stroke-linecap="round"/><path d="M9,1 L11,3" stroke="#f0f2f5" stroke-width="0.9"/></svg>
<div class="a" style="left:857.80px;top:549.20px;width:14.40px;height:14.40px;background:#5b8fd0;"></div>
<svg class="a" style="left:859px;top:549.8px;" width="12" height="13" viewBox="0 0 12 13"><path d="M5.6,1 L6.6,7 M6.2,6.4 L1.6,11.6 M6.2,6.4 L10.8,11.6" stroke="#ffffff" stroke-width="1.7" stroke-linecap="round"/><path d="M9,1 L11,3" stroke="#ffffff" stroke-width="0.9"/></svg>
<svg class="a" style="left:875px;top:550.4px;" width="12" height="12" viewBox="0 0 12 12"><circle cx="6" cy="6" r="3.4" fill="none" stroke="#d9dce1" stroke-width="2.2"/><path d="M6,0.4 L6,11.6 M0.4,6 L11.6,6 M2,2 L10,10 M10,2 L2,10" stroke="#d9dce1" stroke-width="1.5"/><circle cx="6" cy="6" r="1.7" fill="#212733"/></svg>
<svg class="a" style="left:891.9px;top:555.94px;" width="4.2" height="2.7300000000000004" viewBox="0 0 4.2 2.7300000000000004"><path d="M0,0 L4.2,0 L2.1,2.625Z" fill="#d9dce1"/></svg>
<svg class="a" style="left:902px;top:551px;" width="12" height="12" viewBox="0 0 12 12"><path d="M6,0.6 L6,11.4 M0.6,6 L11.4,6" stroke="#f4f5f7" stroke-width="1.5"/></svg>
<div class="a" style="left:914.00px;top:548.00px;width:1.00px;height:17.00px;background:#161b24;"></div>
<svg class="a" style="left:918.6px;top:550px;" width="14" height="13" viewBox="0 0 14 13"><rect x="1" y="1" width="4" height="4" fill="none" stroke="#d9dce1" stroke-width="0.9"/><circle cx="10" cy="5.6" r="2.2" fill="none" stroke="#d9dce1" stroke-width="0.9"/><path d="M5.6,7.4 L8.2,11.6 L3,11.6Z" fill="none" stroke="#d9dce1" stroke-width="0.9"/></svg>
<svg class="a" style="left:936.8px;top:549.8px;" width="11" height="13" viewBox="0 0 11 13"><rect x="1" y="0.6" width="8.2" height="11.4" fill="#e0bf92"/><rect x="2.8" y="2" width="4.6" height="7" fill="#fbf3e4"/><rect x="4" y="3.4" width="2.2" height="3" fill="#e9a23b"/><rect x="7.6" y="0.6" width="1.8" height="2.6" fill="#d8773d"/><rect x="1" y="10.2" width="8.2" height="1.8" fill="#b89468"/></svg>
<svg class="a" style="left:951px;top:549.6px;" width="12" height="13" viewBox="0 0 12 13"><path d="M2,3.4 L5,0.8 L8,3.4 L5,5.8Z" fill="#6fa5e6"/><rect x="1" y="6.4" width="7" height="5" fill="#e6c24a"/><path d="M7,6 L10.6,9.6 L9,11.4" fill="none" stroke="#6fa5e6" stroke-width="1.1"/></svg>
<div class="a" style="left:966.00px;top:548.00px;width:1.00px;height:17.00px;background:#161b24;"></div>
<svg class="a" style="left:970.6px;top:551.4px;" width="12" height="10" viewBox="0 0 12 10"><rect x="0.6" y="0.6" width="10.6" height="8.6" fill="#d9dce1"/><path d="M2,4 L2,2 L4.4,2 M9.6,6 L9.6,7.8 L7.4,7.8" fill="none" stroke="#212733" stroke-width="1"/></svg>
<svg class="a" style="left:987px;top:550.6px;" width="9" height="12" viewBox="0 0 9 12"><path d="M0.6,1.6 L9,1.6 M0.6,5.6 L9,5.6 M0.6,9.6 L9,9.6" stroke="#d9dce1" stroke-width="1.5"/></svg>
<div class="a" style="left:1.00px;top:6.00px;width:456.40px;height:359.40px;background:rgba(0,0,0,0.06);"></div>
<div class="a" style="left:1.20px;top:5.80px;width:455.00px;height:358.80px;background:#f0f0f0;border:1px solid #dcdcdc;box-sizing:border-box;"></div>
<div class="a" style="left:2.00px;top:6.60px;width:453.40px;height:20.00px;background:#ffffff;"></div>
<svg class="a" style="left:7px;top:10px;" width="10" height="11" viewBox="0 0 10 11"><rect x="0.3" y="0.3" width="9.2" height="10.2" rx="1.6" fill="#c41349"/><path d="M0.3,7.4 L9.5,7.4 L9.5,9 Q9.5,10.5 8,10.5 L1.8,10.5 Q0.3,10.5 0.3,9Z" fill="#a30d3b"/><path d="M3.2,6.2 L4.8,1.9 L6.4,6.2 M3.8,4.8 L5.8,4.8" fill="none" stroke="#fff" stroke-width="0.95"/><path d="M3,9 L6.6,9" stroke="#f3d4dd" stroke-width="0.7"/></svg>
<span class="t" style="left:19px;top:10px;font-size:8.4px;line-height:11.76px;color:#2c2c2c;transform:translate(0.40px,0.82px) rotate(0.03deg) scaleX(0.9046);">Plot - Base Plate</span>
<svg class="a" style="left:441.6px;top:12.6px;" width="7" height="7" viewBox="0 0 7 7"><path d="M0.4,0.4 L6.4,6.4 M6.4,0.4 L0.4,6.4" stroke="#222" stroke-width="0.9"/></svg>
<div class="a" style="left:6.50px;top:37.60px;width:300.00px;height:36.60px;border:1px solid #e7e7e7;box-sizing:border-box;"></div>
<div class="a" style="left:9.10px;top:33.60px;width:36.10px;height:8.00px;background:#f0f0f0;"></div>
<span class="t" style="left:10px;top:33px;font-size:7.7px;line-height:10.78px;color:#111111;transform:translate(0.60px,0.11px) rotate(0.03deg) scaleX(0.8496);-webkit-text-stroke:0.13px #111;">Page setup</span>
<span class="t" style="left:14px;top:53px;font-size:7.7px;line-height:10.78px;color:#111111;transform:translate(0.80px,0.31px) rotate(0.03deg) scaleX(0.8554);-webkit-text-stroke:0.13px #111111;">Name:</span>
<div class="a" style="left:55.00px;top:51.50px;width:178.50px;height:13.00px;background:#e1e1e1;border:1px solid #c2c2c2;box-sizing:border-box;"></div>
<span class="t" style="left:57px;top:52px;font-size:7.7px;line-height:10.78px;color:#111111;transform:translate(0.60px,0.81px) rotate(0.03deg) scaleX(0.8722);-webkit-text-stroke:0.13px #111111;">&lt;None&gt;</span>
<svg class="a" style="left:225.5px;top:56.699999999999996px;" width="5.2" height="3.4" viewBox="0 0 5.2 3.4"><path d="M0.4,0.5 L2.6,2.7 L4.8,0.5" fill="none" stroke="#5a5a5a" stroke-width="0.8"/></svg>
<div class="a" style="left:237.20px;top:51.50px;width:59.80px;height:13.00px;background:#e1e1e1;border:1px solid #c0c0c0;box-sizing:border-box;"></div>
<span class="t" style="left:258px;top:53px;font-size:7.7px;line-height:10.78px;color:#111111;transform:translate(0.60px,0.61px) rotate(0.03deg) scaleX(0.8450);-webkit-text-stroke:0.13px #111;">Add...</span>
<div class="a" style="left:6.50px;top:83.00px;width:300.00px;height:95.00px;border:1px solid #e7e7e7;box-sizing:border-box;"></div>
<div class="a" style="left:9.10px;top:79.00px;width:44.40px;height:8.00px;background:#f0f0f0;"></div>
<span class="t" style="left:10px;top:78px;font-size:7.7px;line-height:10.78px;color:#111111;transform:translate(0.60px,0.51px) rotate(0.03deg) scaleX(0.8957);-webkit-text-stroke:0.13px #111;">Printer/plotter</span>
<span class="t" style="left:14px;top:93px;font-size:7.7px;line-height:10.78px;color:#111111;transform:translate(0.80px,0.31px) rotate(0.03deg) scaleX(0.8554);-webkit-text-stroke:0.13px #111111;">Name:</span>
<div class="a" style="left:54.40px;top:90.40px;width:179.60px;height:14.20px;background:#e1e1e1;border:1px solid #c2c2c2;box-sizing:border-box;"></div>
<span class="t" style="left:70px;top:93px;font-size:7.7px;line-height:10.78px;color:#111111;transform:translate(0.00px,0.11px) rotate(0.03deg) scaleX(0.8487);-webkit-text-stroke:0.13px #111111;">AutoCAD PDF (High Quality Print).pc3</span>
<svg class="a" style="left:226.0px;top:96.2px;" width="5.2" height="3.4" viewBox="0 0 5.2 3.4"><path d="M0.4,0.5 L2.6,2.7 L4.8,0.5" fill="none" stroke="#5a5a5a" stroke-width="0.8"/></svg>
<svg class="a" style="left:56.4px;top:91.4px;" width="12" height="12" viewBox="0 0 12 12"><rect x="0.6" y="0.6" width="10.4" height="3.6" rx="0.6" fill="#4a505a"/><rect x="0.8" y="1" width="1.8" height="1.8" fill="#f2f4f7"/><rect x="8.8" y="1" width="1.8" height="1.8" fill="#f2f4f7"/><rect x="1.6" y="4" width="8.6" height="3.2" fill="#666c76"/><rect x="3.6" y="3.6" width="4" height="3.2" fill="#79bdeb"/><rect x="5" y="4.2" width="1.2" height="1.6" fill="#e8f4fc"/><path d="M2.4,7.2 L1.2,11 M9.2,7.2 L10.6,11.4" stroke="#6a707a" stroke-width="0.9"/><path d="M2.6,8.4 L9,8.4" stroke="#a9aeb6" stroke-width="0.8"/><circle cx="1.4" cy="10.6" r="0.8" fill="#8fb35a"/></svg>
<div class="a" style="left:238.00px;top:89.60px;width:59.00px;height:13.00px;background:#e1e1e1;border:1px solid #c0c0c0;box-sizing:border-box;"></div>
<span class="t" style="left:250px;top:91px;font-size:7.7px;line-height:10.78px;color:#111111;transform:translate(0.20px,0.71px) rotate(0.03deg) scaleX(0.8335);-webkit-text-stroke:0.13px #111;">Properties...</span>
<div class="a" style="left:51.60px;top:87.00px;width:185.20px;height:21.60px;border:2px solid #e2212a;box-sizing:border-box;border-radius:1px;"></div>
<span class="t" style="left:14px;top:111px;font-size:7.7px;line-height:10.78px;color:#111111;transform:translate(0.80px,0.01px) rotate(0.03deg) scaleX(0.8691);-webkit-text-stroke:0.13px #111111;">Plotter:</span>
<span class="t" style="left:55px;top:111px;font-size:7.7px;line-height:10.78px;color:#111111;transform:translate(0.00px,0.01px) rotate(0.03deg) scaleX(0.8497);-webkit-text-stroke:0.13px #111111;">DWG To PDF - PDF ePlot - by Autodesk</span>
<span class="t" style="left:14px;top:126px;font-size:7.7px;line-height:10.78px;color:#111111;transform:translate(0.80px,0.31px) rotate(0.03deg) scaleX(0.8784);-webkit-text-stroke:0.13px #111111;">Where:</span>
<span class="t" style="left:55px;top:126px;font-size:7.7px;line-height:10.78px;color:#111111;transform:translate(0.00px,0.31px) rotate(0.03deg) scaleX(0.8221);-webkit-text-stroke:0.13px #111111;">File</span>
<span class="t" style="left:14px;top:142px;font-size:7.7px;line-height:10.78px;color:#111111;transform:translate(0.80px,0.31px) rotate(0.03deg) scaleX(0.8658);-webkit-text-stroke:0.13px #111111;">Description:</span>
<div class="a" style="left:14.60px;top:160.90px;width:8.60px;height:8.60px;background:#ffffff;border:0.8px solid #d2d2d2;box-sizing:border-box;"></div>
<svg class="a" style="left:14.6px;top:160.89999999999998px;" width="8.6" height="8.6" viewBox="0 0 8.6 8.6"><path d="M1.9,4.4 L3.7,6.2 L6.9,2.5" fill="none" stroke="#c4c4c4" stroke-width="0.95"/></svg>
<span class="t" style="left:25px;top:161px;font-size:7.7px;line-height:10.78px;color:#a6a6a6;transform:translate(0.00px,0.21px) rotate(0.03deg) scaleX(0.8636);-webkit-text-stroke:0.13px #a6a6a6;">Plot to file</span>
<div class="a" style="left:165.70px;top:160.00px;width:67.80px;height:13.40px;background:#e1e1e1;border:1px solid #c0c0c0;box-sizing:border-box;"></div>
<span class="t" style="left:178px;top:162px;font-size:7.7px;line-height:10.78px;color:#111111;transform:translate(0.10px,0.31px) rotate(0.03deg) scaleX(0.8516);-webkit-text-stroke:0.13px #111;">PDF Options...</span>
<div class="a" style="left:236.70px;top:111.40px;width:60.30px;height:62.60px;background:#ffffff;"></div>
<svg class="a" style="left:236.7px;top:111.4px" width="60.3" height="62.6" viewBox="236.7 111.4 60.3 62.6">
<defs><pattern id="hat" width="2.6" height="2.6" patternUnits="userSpaceOnUse" patternTransform="rotate(-45)"><rect width="2.6" height="2.6" fill="#fff"/><rect width="2.6" height="0.85" fill="#4a4a4a"/></pattern></defs>
<rect x="239.4" y="132" width="45.8" height="31.2" fill="url(#hat)" stroke="#1e1e1e" stroke-width="1"/>
<path d="M239.3,121 L239.3,130.6 M285.3,121 L285.3,130.6 M239.6,125.6 L247.6,125.6 M277.4,125.6 L285,125.6" stroke="#222" stroke-width="0.8" fill="none"/>
<path d="M239.6,125.6 L242.4,124.2 L242.4,127Z M285,125.6 L282.2,124.2 L282.2,127Z" fill="#222"/>
<path d="M286.6,131.8 L293.6,131.8 M286.6,163.4 L293.6,163.4 M290.6,122.6 L290.6,131.6 M290.6,163.6 L290.6,172.6" stroke="#222" stroke-width="0.8" fill="none"/>
<path d="M290.6,131.6 L289.2,128.8 L292,128.8Z M290.6,163.6 L289.2,166.4 L292,166.4Z" fill="#222"/>
<text x="249.2" y="128.2" font-family="Liberation Mono, monospace" font-weight="bold" font-size="7.6" fill="#222" textLength="13.4" lengthAdjust="spacingAndGlyphs">420</text>
<text x="267" y="128.2" font-family="Liberation Mono, monospace" font-weight="bold" font-size="7.6" fill="#222" textLength="9.6" lengthAdjust="spacingAndGlyphs">MM</text>
<text x="288" y="133.6" font-family="Liberation Mono, monospace" font-weight="bold" font-size="7.6" fill="#222" textLength="13.6" lengthAdjust="spacingAndGlyphs" transform="rotate(90 288 133.6)">297</text>
<text x="288" y="151.6" font-family="Liberation Mono, monospace" font-weight="bold" font-size="7.6" fill="#222" textLength="9.6" lengthAdjust="spacingAndGlyphs" transform="rotate(90 288 151.6)">MM</text>
</svg>
<div class="a" style="left:6.50px;top:189.50px;width:222.50px;height:32.90px;border:1px solid #e7e7e7;box-sizing:border-box;"></div>
<div class="a" style="left:9.10px;top:185.50px;width:33.80px;height:8.00px;background:#f0f0f0;"></div>
<span class="t" style="left:10px;top:185px;font-size:7.7px;line-height:10.78px;color:#111111;transform:translate(0.60px,0.01px) rotate(0.03deg) scaleX(0.8466);-webkit-text-stroke:0.13px #111;">Paper size</span>
<div class="a" style="left:14.10px;top:199.00px;width:202.70px;height:13.60px;background:#e1e1e1;border:1px solid #c2c2c2;box-sizing:border-box;"></div>
<span class="t" style="left:16px;top:201px;font-size:7.7px;line-height:10.78px;color:#111111;transform:translate(0.70px,0.41px) rotate(0.03deg) scaleX(0.8766);-webkit-text-stroke:0.13px #111111;">ISO A3 (420.00 x 297.00 MM)</span>
<svg class="a" style="left:208.8px;top:204.50000000000003px;" width="5.2" height="3.4" viewBox="0 0 5.2 3.4"><path d="M0.4,0.5 L2.6,2.7 L4.8,0.5" fill="none" stroke="#5a5a5a" stroke-width="0.8"/></svg>
<div class="a" style="left:8.40px;top:193.00px;width:221.40px;height:26.60px;border:2px solid #e2212a;box-sizing:border-box;border-radius:1px;"></div>
<div class="a" style="left:229.60px;top:190.20px;width:76.90px;height:32.20px;border:1px solid #e7e7e7;box-sizing:border-box;"></div>
<div class="a" style="left:230.70px;top:186.20px;width:54.80px;height:8.00px;background:#f0f0f0;"></div>
<span class="t" style="left:232px;top:185px;font-size:7.7px;line-height:10.78px;color:#111111;transform:translate(0.20px,0.71px) rotate(0.03deg) scaleX(0.8584);-webkit-text-stroke:0.13px #111;">Number of copies</span>
<div class="a" style="left:248.00px;top:198.70px;width:35.40px;height:13.60px;background:#f7f7f7;border:1px solid #d2d2d2;box-sizing:border-box;"></div>
<span class="t" style="left:252px;top:200px;font-size:7.7px;line-height:10.78px;color:#a6a6a6;transform:translate(0.00px,0.71px) rotate(0.03deg) scaleX(0.9000);-webkit-text-stroke:0.13px #a6a6a6;">1</span>
<div class="a" style="left:272.00px;top:199.60px;width:10.60px;height:11.80px;background:#ececec;border:1px solid #dadada;box-sizing:border-box;"></div>
<svg class="a" style="left:274.8px;top:201.2px;" width="5" height="3.4" viewBox="0 0 5 3.4"><path d="M0.4,3 L2.5,0.4 L4.6,3Z" fill="#8c8c8c"/></svg>
<svg class="a" style="left:274.8px;top:206.8px;" width="5" height="3.4" viewBox="0 0 5 3.4"><path d="M0.4,0.4 L2.5,3 L4.6,0.4Z" fill="#8c8c8c"/></svg>
<div class="a" style="left:6.50px;top:230.00px;width:171.50px;height:44.50px;border:1px solid #e7e7e7;box-sizing:border-box;"></div>
<div class="a" style="left:9.10px;top:226.00px;width:29.70px;height:8.00px;background:#f0f0f0;"></div>
<span class="t" style="left:10px;top:225px;font-size:7.7px;line-height:10.78px;color:#111111;transform:translate(0.60px,0.51px) rotate(0.03deg) scaleX(0.8663);-webkit-text-stroke:0.13px #111;">Plot area</span>
<span class="t" style="left:14px;top:239px;font-size:7.7px;line-height:10.78px;color:#111111;transform:translate(0.80px,0.21px) rotate(0.03deg) scaleX(0.8930);-webkit-text-stroke:0.13px #111111;">What to plot:</span>
<div class="a" style="left:14.10px;top:251.70px;width:61.70px;height:13.60px;background:#e1e1e1;border:1px solid #c2c2c2;box-sizing:border-box;"></div>
<span class="t" style="left:16px;top:254px;font-size:7.7px;line-height:10.78px;color:#111111;transform:translate(0.70px,0.11px) rotate(0.03deg) scaleX(0.8262);-webkit-text-stroke:0.13px #111111;">Layout</span>
<svg class="a" style="left:67.8px;top:257.2px;" width="5.2" height="3.4" viewBox="0 0 5.2 3.4"><path d="M0.4,0.5 L2.6,2.7 L4.8,0.5" fill="none" stroke="#5a5a5a" stroke-width="0.8"/></svg>
<div class="a" style="left:182.70px;top:230.00px;width:123.80px;height:107.20px;border:1px solid #e7e7e7;box-sizing:border-box;"></div>
<div class="a" style="left:185.80px;top:226.00px;width:30.70px;height:8.00px;background:#f0f0f0;"></div>
<span class="t" style="left:187px;top:225px;font-size:7.7px;line-height:10.78px;color:#111111;transform:translate(0.30px,0.51px) rotate(0.03deg) scaleX(0.8297);-webkit-text-stroke:0.13px #111;">Plot scale</span>
<div class="a" style="left:188.40px;top:240.90px;width:8.60px;height:8.60px;background:#ffffff;border:0.8px solid #d2d2d2;box-sizing:border-box;"></div>
<span class="t" style="left:198px;top:241px;font-size:7.7px;line-height:10.78px;color:#a6a6a6;transform:translate(0.80px,0.21px) rotate(0.03deg) scaleX(0.8524);-webkit-text-stroke:0.13px #a6a6a6;">Fit to paper</span>
<span class="t" style="left:188px;top:259px;font-size:7.7px;line-height:10.78px;color:#111111;transform:translate(0.00px,0.31px) rotate(0.03deg) scaleX(0.8224);-webkit-text-stroke:0.13px #111111;">Scale:</span>
<div class="a" style="left:208.60px;top:257.30px;width:91.60px;height:12.70px;background:#e1e1e1;border:1px solid #c2c2c2;box-sizing:border-box;"></div>
<span class="t" style="left:211px;top:259px;font-size:7.7px;line-height:10.78px;color:#111111;transform:translate(0.40px,0.26px) rotate(0.03deg) scaleX(0.7847);-webkit-text-stroke:0.13px #111111;">1:1</span>
<svg class="a" style="left:292.2px;top:262.34999999999997px;" width="5.2" height="3.4" viewBox="0 0 5.2 3.4"><path d="M0.4,0.5 L2.6,2.7 L4.8,0.5" fill="none" stroke="#5a5a5a" stroke-width="0.8"/></svg>
<div class="a" style="left:206.00px;top:254.00px;width:19.60px;height:15.40px;border:2px solid #e2212a;box-sizing:border-box;border-radius:1px;"></div>
<div class="a" style="left:208.00px;top:276.60px;width:37.20px;height:15.00px;background:#ffffff;border:1px solid #3a8ee0;box-sizing:border-box;"></div>
<span class="t" style="left:211px;top:278px;font-size:7.7px;line-height:10.78px;color:#111111;transform:translate(0.20px,0.81px) rotate(0.03deg) scaleX(0.9000);-webkit-text-stroke:0.13px #111111;">1</span>
<div class="a" style="left:215.20px;top:280.40px;width:0.80px;height:6.60px;background:#111;"></div>
<div class="a" style="left:246.80px;top:276.70px;width:42.60px;height:14.50px;background:#e1e1e1;border:1px solid #c2c2c2;box-sizing:border-box;"></div>
<span class="t" style="left:249px;top:278px;font-size:7.7px;line-height:10.78px;color:#111111;transform:translate(0.00px,0.66px) rotate(0.03deg) scaleX(0.8574);-webkit-text-stroke:0.13px #111111;">mm</span>
<svg class="a" style="left:281.4px;top:282.65px;" width="5.2" height="3.4" viewBox="0 0 5.2 3.4"><path d="M0.4,0.5 L2.6,2.7 L4.8,0.5" fill="none" stroke="#5a5a5a" stroke-width="0.8"/></svg>
<span class="t" style="left:293px;top:276px;font-size:7.7px;line-height:10.78px;color:#111111;transform:translate(0.20px,0.81px) rotate(0.03deg) scaleX(0.9785);-webkit-text-stroke:0.13px #111111;">=</span>
<div class="a" style="left:208.00px;top:297.30px;width:37.20px;height:14.30px;background:#ffffff;border:1px solid #9c9c9c;box-sizing:border-box;"></div>
<span class="t" style="left:211px;top:298px;font-size:7.7px;line-height:10.78px;color:#111111;transform:translate(0.20px,0.71px) rotate(0.03deg) scaleX(0.9000);-webkit-text-stroke:0.13px #111111;">1</span>
<span class="t" style="left:246px;top:299px;font-size:7.7px;line-height:10.78px;color:#111111;transform:translate(0.80px,0.21px) rotate(0.03deg) scaleX(0.9021);-webkit-text-stroke:0.13px #111111;">unit</span>
<div class="a" style="left:208.20px;top:319.30px;width:8.60px;height:8.60px;background:#ffffff;border:0.8px solid #484848;box-sizing:border-box;"></div>
<span class="t" style="left:218px;top:319px;font-size:7.7px;line-height:10.78px;color:#111111;transform:translate(0.60px,0.61px) rotate(0.03deg) scaleX(0.8740);-webkit-text-stroke:0.13px #111111;">Scale lineweights</span>
<div class="a" style="left:6.50px;top:283.40px;width:171.10px;height:53.80px;border:1px solid #e7e7e7;box-sizing:border-box;"></div>
<div class="a" style="left:9.10px;top:279.40px;width:120.40px;height:8.00px;background:#f0f0f0;"></div>
<span class="t" style="left:10px;top:278px;font-size:7.7px;line-height:10.78px;color:#111111;transform:translate(0.60px,0.91px) rotate(0.03deg) scaleX(0.9003);-webkit-text-stroke:0.13px #111;">Plot offset (origin set to printable area)</span>
<span class="t" style="left:15px;top:297px;font-size:7.7px;line-height:10.78px;color:#111111;transform:translate(0.00px,0.11px) rotate(0.03deg) scaleX(0.8247);-webkit-text-stroke:0.13px #111111;">X:</span>
<div class="a" style="left:27.00px;top:292.60px;width:43.40px;height:14.60px;background:#ffffff;border:1px solid #929292;box-sizing:border-box;"></div>
<span class="t" style="left:30px;top:294px;font-size:7.7px;line-height:10.78px;color:#111111;transform:translate(0.20px,0.01px) rotate(0.03deg) scaleX(0.8941);-webkit-text-stroke:0.13px #111111;">0.00</span>
<span class="t" style="left:74px;top:295px;font-size:7.7px;line-height:10.78px;color:#111111;transform:translate(0.00px,0.31px) rotate(0.03deg) scaleX(0.8730);-webkit-text-stroke:0.13px #111111;">mm</span>
<span class="t" style="left:15px;top:318px;font-size:7.7px;line-height:10.78px;color:#111111;transform:translate(0.40px,0.81px) rotate(0.03deg) scaleX(0.8758);-webkit-text-stroke:0.13px #111111;">Y:</span>
<div class="a" style="left:27.00px;top:313.60px;width:43.40px;height:14.60px;background:#ffffff;border:1px solid #929292;box-sizing:border-box;"></div>
<span class="t" style="left:30px;top:315px;font-size:7.7px;line-height:10.78px;color:#111111;transform:translate(0.20px,0.61px) rotate(0.03deg) scaleX(0.8941);-webkit-text-stroke:0.13px #111111;">0.00</span>
<span class="t" style="left:74px;top:315px;font-size:7.7px;line-height:10.78px;color:#111111;transform:translate(0.00px,0.81px) rotate(0.03deg) scaleX(0.8730);-webkit-text-stroke:0.13px #111111;">mm</span>
<div class="a" style="left:9.70px;top:288.80px;width:67.30px;height:45.20px;border:2px solid #e2212a;box-sizing:border-box;border-radius:1px;"></div>
<div class="a" style="left:107.80px;top:296.30px;width:8.60px;height:8.60px;background:#ffffff;border:0.8px solid #d2d2d2;box-sizing:border-box;"></div>
<span class="t" style="left:118px;top:296px;font-size:7.7px;line-height:10.78px;color:#a6a6a6;transform:translate(0.20px,0.61px) rotate(0.03deg) scaleX(0.8157);-webkit-text-stroke:0.13px #a6a6a6;">Center the plot</span>
<div class="a" style="left:6.70px;top:343.80px;width:41.90px;height:13.20px;background:#e1e1e1;border:1px solid #c0c0c0;box-sizing:border-box;"></div>
<span class="t" style="left:13px;top:346px;font-size:7.7px;line-height:10.78px;color:#111111;transform:translate(0.35px,0.01px) rotate(0.03deg) scaleX(0.8568);-webkit-text-stroke:0.13px #111;">Preview...</span>
<div class="a" style="left:208.60px;top:343.80px;width:66.20px;height:13.20px;background:#e1e1e1;border:1px solid #c0c0c0;box-sizing:border-box;"></div>
<span class="t" style="left:219px;top:346px;font-size:7.7px;line-height:10.78px;color:#111111;transform:translate(0.00px,0.01px) rotate(0.03deg) scaleX(0.8553);-webkit-text-stroke:0.13px #111;">Apply to Layout</span>
<div class="a" style="left:279.00px;top:343.60px;width:45.00px;height:13.40px;background:#e2e2e2;border:1.4px solid #1779d4;box-sizing:border-box;"></div>
<span class="t" style="left:297px;top:345px;font-size:7.7px;line-height:10.78px;color:#111111;transform:translate(0.40px,0.91px) rotate(0.03deg) scaleX(0.7371);-webkit-text-stroke:0.13px #111;">OK</span>
<div class="a" style="left:328.60px;top:343.80px;width:45.10px;height:13.20px;background:#e1e1e1;border:1px solid #c0c0c0;box-sizing:border-box;"></div>
<span class="t" style="left:341px;top:346px;font-size:7.7px;line-height:10.78px;color:#111111;transform:translate(0.45px,0.01px) rotate(0.03deg) scaleX(0.8094);-webkit-text-stroke:0.13px #111;">Cancel</span>
<div class="a" style="left:378.30px;top:343.80px;width:45.10px;height:13.20px;background:#e1e1e1;border:1px solid #c0c0c0;box-sizing:border-box;"></div>
<span class="t" style="left:394px;top:346px;font-size:7.7px;line-height:10.78px;color:#111111;transform:translate(0.35px,0.01px) rotate(0.03deg) scaleX(0.8209);-webkit-text-stroke:0.13px #111;">Help</span>
<svg class="a" style="left:427.6px;top:342.6px;" width="14" height="14" viewBox="0 0 14 14"><circle cx="6.9" cy="6.8" r="6.1" fill="#f6f6f6" stroke="#8a8a8a" stroke-width="0.8"/><path d="M8.2,3.6 L5,6.8 L8.2,10" fill="none" stroke="#333" stroke-width="1.4"/></svg>
<div class="a" style="left:313.00px;top:37.40px;width:137.00px;height:37.00px;border:1px solid #e7e7e7;box-sizing:border-box;"></div>
<div class="a" style="left:315.30px;top:33.40px;width:104.80px;height:8.00px;background:#f0f0f0;"></div>
<span class="t" style="left:316px;top:32px;font-size:7.7px;line-height:10.78px;color:#111111;transform:translate(0.80px,0.91px) rotate(0.03deg) scaleX(0.8809);-webkit-text-stroke:0.13px #111;">Plot style table (pen assignments)</span>
<div class="a" style="left:322.00px;top:51.00px;width:104.60px;height:13.60px;background:#e1e1e1;border:1px solid #c2c2c2;box-sizing:border-box;"></div>
<span class="t" style="left:324px;top:53px;font-size:7.7px;line-height:10.78px;color:#111111;transform:translate(0.60px,0.91px) rotate(0.03deg) scaleX(0.8764);-webkit-text-stroke:0.13px #111111;">Screening 100%.ctb</span>
<svg class="a" style="left:418.6px;top:56.49999999999999px;" width="5.2" height="3.4" viewBox="0 0 5.2 3.4"><path d="M0.4,0.5 L2.6,2.7 L4.8,0.5" fill="none" stroke="#5a5a5a" stroke-width="0.8"/></svg>
<div class="a" style="left:427.60px;top:51.30px;width:15.40px;height:16.00px;background:#ececec;border:1px dotted #bdbdbd;box-sizing:border-box;"></div>
<svg class="a" style="left:429.4px;top:52.8px;" width="12" height="13" viewBox="0 0 12 13"><rect x="0.8" y="1" width="10.6" height="3.8" rx="0.8" fill="#3e4452"/><rect x="1.8" y="1.8" width="1.6" height="1.6" fill="#e8eaee"/><rect x="8.4" y="1.6" width="2" height="2" fill="#e8eaee"/><path d="M1.6,5.4 L1.6,11 Q1.6,12 0.6,12" fill="none" stroke="#4b5160" stroke-width="1.1"/><path d="M3.8,9.6 L6.2,6.4 L8,8.4 L10.6,5.2 L10.2,10 L7.6,11.6 L5.6,10.2Z" fill="#6ea6e0"/><path d="M4,11.6 L9.8,6" stroke="#3f7fd0" stroke-width="1"/></svg>
<div class="a" style="left:309.10px;top:30.20px;width:141.70px;height:41.80px;border:2px solid #e2212a;box-sizing:border-box;border-radius:1px;"></div>
<div class="a" style="left:313.00px;top:83.20px;width:137.00px;height:64.60px;border:1px solid #e7e7e7;box-sizing:border-box;"></div>
<div class="a" style="left:315.30px;top:79.20px;width:77.50px;height:8.00px;background:#f0f0f0;"></div>
<span class="t" style="left:316px;top:78px;font-size:7.7px;line-height:10.78px;color:#111111;transform:translate(0.80px,0.71px) rotate(0.03deg) scaleX(0.8834);-webkit-text-stroke:0.13px #111;">Shaded viewport options</span>
<span class="t" style="left:321px;top:93px;font-size:7.7px;line-height:10.78px;color:#a6a6a6;transform:translate(0.80px,0.21px) rotate(0.03deg) scaleX(0.8854);-webkit-text-stroke:0.13px #a6a6a6;">Shade plot</span>
<div class="a" style="left:366.20px;top:91.40px;width:77.60px;height:13.00px;background:#cfcfcf;border:1px solid #c6c6c6;box-sizing:border-box;"></div>
<div class="a" style="left:367.40px;top:92.60px;width:64.60px;height:10.60px;background:#ececec;"></div>
<span class="t" style="left:369px;top:93px;font-size:7.7px;line-height:10.78px;color:#a6a6a6;transform:translate(0.40px,0.51px) rotate(0.03deg) scaleX(0.8475);-webkit-text-stroke:0.13px #a6a6a6;">As displayed</span>
<span class="t" style="left:321px;top:112px;font-size:7.7px;line-height:10.78px;color:#111111;transform:translate(0.80px,0.11px) rotate(0.03deg) scaleX(0.8679);-webkit-text-stroke:0.13px #111111;">Quality</span>
<div class="a" style="left:366.20px;top:109.80px;width:77.60px;height:13.80px;background:#e1e1e1;border:1px solid #c2c2c2;box-sizing:border-box;"></div>
<span class="t" style="left:368px;top:112px;font-size:7.7px;line-height:10.78px;color:#111111;transform:translate(0.80px,0.31px) rotate(0.03deg) scaleX(0.8704);-webkit-text-stroke:0.13px #111111;">Normal</span>
<svg class="a" style="left:435.8px;top:115.39999999999999px;" width="5.2" height="3.4" viewBox="0 0 5.2 3.4"><path d="M0.4,0.5 L2.6,2.7 L4.8,0.5" fill="none" stroke="#5a5a5a" stroke-width="0.8"/></svg>
<span class="t" style="left:321px;top:131px;font-size:7.7px;line-height:10.78px;color:#a6a6a6;transform:translate(0.80px,0.71px) rotate(0.03deg) scaleX(0.7635);-webkit-text-stroke:0.13px #a6a6a6;">DPI</span>
<div class="a" style="left:366.20px;top:127.70px;width:77.60px;height:14.40px;background:#f4f4f4;border:1px solid #d9d9d9;box-sizing:border-box;"></div>
<span class="t" style="left:369px;top:129px;font-size:7.7px;line-height:10.78px;color:#a6a6a6;transform:translate(0.60px,0.21px) rotate(0.03deg) scaleX(0.8251);-webkit-text-stroke:0.13px #a6a6a6;">100</span>
<div class="a" style="left:313.00px;top:156.40px;width:137.00px;height:124.00px;border:1px solid #e7e7e7;box-sizing:border-box;"></div>
<div class="a" style="left:315.30px;top:152.40px;width:38.20px;height:8.00px;background:#f0f0f0;"></div>
<span class="t" style="left:316px;top:151px;font-size:7.7px;line-height:10.78px;color:#111111;transform:translate(0.80px,0.91px) rotate(0.03deg) scaleX(0.8748);-webkit-text-stroke:0.13px #111;">Plot options</span>
<div class="a" style="left:322.00px;top:165.40px;width:8.60px;height:8.60px;background:#ffffff;border:0.8px solid #484848;box-sizing:border-box;"></div>
<span class="t" style="left:332px;top:165px;font-size:7.7px;line-height:10.78px;color:#111111;transform:translate(0.40px,0.71px) rotate(0.03deg) scaleX(0.8560);-webkit-text-stroke:0.13px #111111;">Plot in background</span>
<div class="a" style="left:322.00px;top:179.20px;width:8.60px;height:8.60px;background:#ffffff;border:0.8px solid #484848;box-sizing:border-box;"></div>
<svg class="a" style="left:322px;top:179.2px;" width="8.6" height="8.6" viewBox="0 0 8.6 8.6"><path d="M1.9,4.4 L3.7,6.2 L6.9,2.5" fill="none" stroke="#222" stroke-width="0.95"/></svg>
<span class="t" style="left:332px;top:179px;font-size:7.7px;line-height:10.78px;color:#111111;transform:translate(0.40px,0.51px) rotate(0.03deg) scaleX(0.8846);-webkit-text-stroke:0.13px #111111;">Plot object lineweights</span>
<div class="a" style="left:322.00px;top:192.90px;width:8.60px;height:8.60px;background:#ffffff;border:0.8px solid #484848;box-sizing:border-box;"></div>
<span class="t" style="left:332px;top:193px;font-size:7.7px;line-height:10.78px;color:#111111;transform:translate(0.40px,0.21px) rotate(0.03deg) scaleX(0.8611);-webkit-text-stroke:0.13px #111111;">Plot transparency</span>
<div class="a" style="left:322.00px;top:207.70px;width:8.60px;height:8.60px;background:#ffffff;border:0.8px solid #484848;box-sizing:border-box;"></div>
<svg class="a" style="left:322px;top:207.7px;" width="8.6" height="8.6" viewBox="0 0 8.6 8.6"><path d="M1.9,4.4 L3.7,6.2 L6.9,2.5" fill="none" stroke="#222" stroke-width="0.95"/></svg>
<span class="t" style="left:332px;top:208px;font-size:7.7px;line-height:10.78px;color:#111111;transform:translate(0.40px,0.01px) rotate(0.03deg) scaleX(0.8843);-webkit-text-stroke:0.13px #111111;">Plot with plot styles</span>
<div class="a" style="left:322.00px;top:222.40px;width:8.60px;height:8.60px;background:#ffffff;border:0.8px solid #484848;box-sizing:border-box;"></div>
<svg class="a" style="left:322px;top:222.39999999999998px;" width="8.6" height="8.6" viewBox="0 0 8.6 8.6"><path d="M1.9,4.4 L3.7,6.2 L6.9,2.5" fill="none" stroke="#222" stroke-width="0.95"/></svg>
<span class="t" style="left:332px;top:222px;font-size:7.7px;line-height:10.78px;color:#111111;transform:translate(0.40px,0.71px) rotate(0.03deg) scaleX(0.8628);-webkit-text-stroke:0.13px #111111;">Plot paperspace last</span>
<div class="a" style="left:322.00px;top:237.10px;width:8.60px;height:8.60px;background:#ffffff;border:0.8px solid #484848;box-sizing:border-box;"></div>
<span class="t" style="left:332px;top:237px;font-size:7.7px;line-height:10.78px;color:#111111;transform:translate(0.40px,0.41px) rotate(0.03deg) scaleX(0.8684);-webkit-text-stroke:0.13px #111111;">Hide paperspace objects</span>
<div class="a" style="left:322.00px;top:251.70px;width:8.60px;height:8.60px;background:#ffffff;border:0.8px solid #484848;box-sizing:border-box;"></div>
<span class="t" style="left:332px;top:252px;font-size:7.7px;line-height:10.78px;color:#111111;transform:translate(0.40px,0.01px) rotate(0.03deg) scaleX(0.8623);-webkit-text-stroke:0.13px #111111;">Plot stamp on</span>
<div class="a" style="left:322.00px;top:266.50px;width:8.60px;height:8.60px;background:#ffffff;border:0.8px solid #484848;box-sizing:border-box;"></div>
<span class="t" style="left:332px;top:266px;font-size:7.7px;line-height:10.78px;color:#111111;transform:translate(0.40px,0.81px) rotate(0.03deg) scaleX(0.8645);-webkit-text-stroke:0.13px #111111;">Save changes to layout</span>
<div class="a" style="left:313.00px;top:287.20px;width:137.00px;height:50.00px;border:1px solid #e7e7e7;box-sizing:border-box;"></div>
<div class="a" style="left:315.30px;top:283.20px;width:62.00px;height:8.00px;background:#f0f0f0;"></div>
<span class="t" style="left:316px;top:282px;font-size:7.7px;line-height:10.78px;color:#111111;transform:translate(0.80px,0.71px) rotate(0.03deg) scaleX(0.8893);-webkit-text-stroke:0.13px #111;">Drawing orientation</span>
<svg class="a" style="left:321.9px;top:296.7px;" width="9.2" height="9.2" viewBox="0 0 9.2 9.2"><circle cx="4.6" cy="4.6" r="4" fill="#fff" stroke="#3a3a3a" stroke-width="0.85"/></svg>
<span class="t" style="left:332px;top:296px;font-size:7.7px;line-height:10.78px;color:#111111;transform:translate(0.50px,0.91px) rotate(0.03deg) scaleX(0.8904);-webkit-text-stroke:0.13px #111111;">Portrait</span>
<svg class="a" style="left:321.9px;top:309.4px;" width="9.2" height="9.2" viewBox="0 0 9.2 9.2"><circle cx="4.6" cy="4.6" r="4" fill="#fff" stroke="#3a3a3a" stroke-width="0.85"/><circle cx="4.6" cy="4.6" r="2.3" fill="#1a1a1a"/></svg>
<span class="t" style="left:332px;top:309px;font-size:7.7px;line-height:10.78px;color:#111111;transform:translate(0.50px,0.61px) rotate(0.03deg) scaleX(0.8254);-webkit-text-stroke:0.13px #111111;">Landscape</span>
<div class="a" style="left:322.00px;top:324.30px;width:8.60px;height:8.60px;background:#ffffff;border:0.8px solid #484848;box-sizing:border-box;"></div>
<span class="t" style="left:332px;top:324px;font-size:7.7px;line-height:10.78px;color:#111111;transform:translate(0.40px,0.61px) rotate(0.03deg) scaleX(0.8667);-webkit-text-stroke:0.13px #111111;">Plot upside-down</span>
<svg class="a" style="left:425px;top:306.1px;" width="21.4" height="16.4" viewBox="0 0 21.4 16.4"><path d="M0.5,0.5 L15.6,0.5 L20.9,5.8 L20.9,15.9 L0.5,15.9Z" fill="#ffffff" stroke="#a2a2a2" stroke-width="0.8"/><path d="M15.6,0.5 L15.6,5.8 L20.9,5.8Z" fill="#4a4a4a"/><path d="M5.4,13.8 L10,3.9 L14.6,13.8 M7,10.4 L13,10.4" fill="none" stroke="#4597e0" stroke-width="1.5"/></svg>
</div></body></html>
